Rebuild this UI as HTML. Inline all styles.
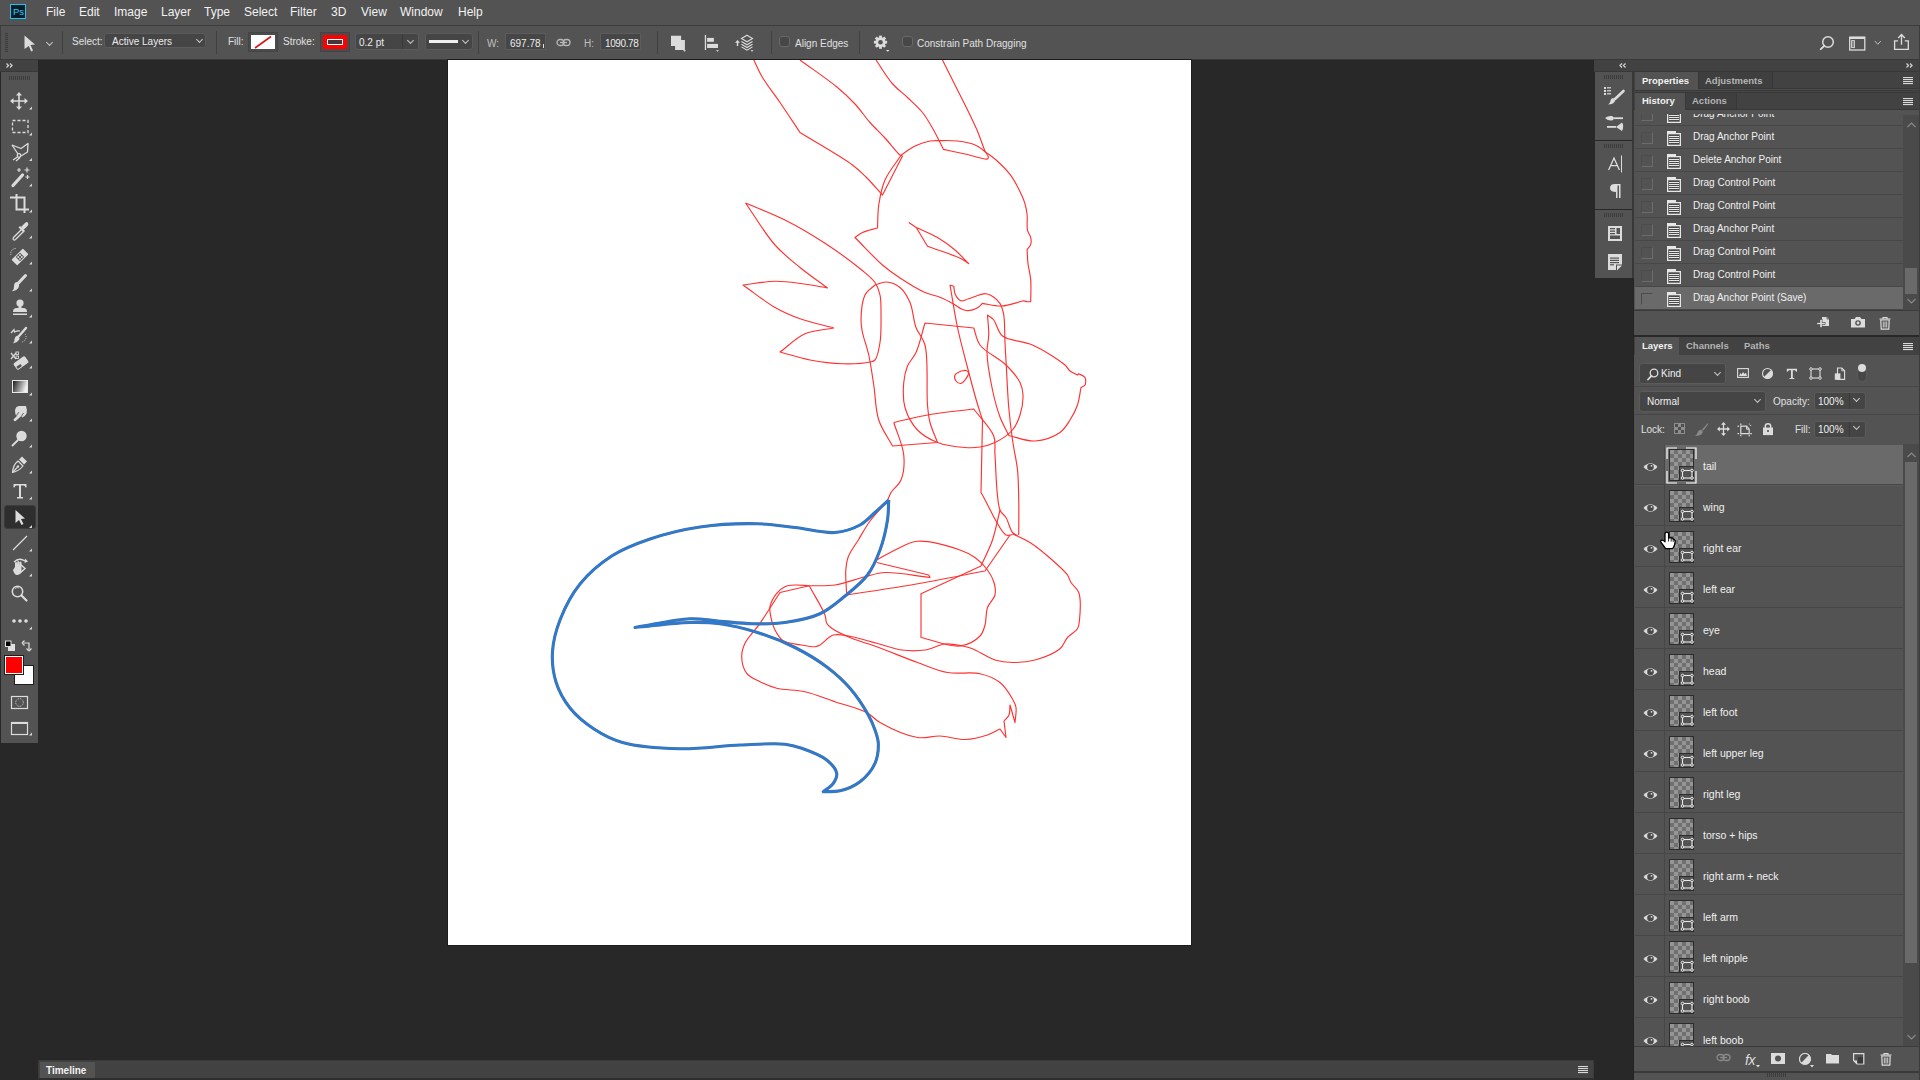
<!DOCTYPE html>
<html><head><meta charset="utf-8">
<style>
*{box-sizing:border-box;margin:0;padding:0}
html,body{width:1920px;height:1080px;overflow:hidden;background:#282828;font-family:"Liberation Sans",sans-serif;color:#e8e8e8}
.a{position:absolute}
.t{position:absolute;white-space:nowrap;line-height:1}
#menubar{left:0;top:0;width:1920px;height:25px;background:#535353}
#menubar .t{font-size:12px;top:6px;color:#f2f2f2}
#opts{left:0;top:25px;width:1920px;height:35px;background:#535353;border-top:1px solid #3c3c3c;border-bottom:1px solid #393939}
#opts .t{font-size:10px;color:#e6e6e6}
.sep{position:absolute;width:1px;background:#404040}
.field{position:absolute;background:#454545;border:1px solid #5b5b5b;border-radius:3px}
.chev{position:absolute;width:6px;height:6px;border-right:1px solid #bdbdbd;border-bottom:1px solid #bdbdbd;transform:rotate(45deg)}
.cb{position:absolute;width:11px;height:11px;border:1px solid #686868;background:#474747;border-radius:3px}
.ptab{position:absolute;font-size:9.5px;font-weight:bold;line-height:1;white-space:nowrap}
.hrow{position:absolute;left:1635px;width:268px;height:23px;border-bottom:1px solid #484848;background:#535353}
.hrow .t{font-size:10px;left:58px;top:7px;color:#f0f0f0}
.hico{position:absolute;left:39px;top:5px;width:14px;height:14px;border:1px solid #e0e0e0;border-radius:1px}
.hbox{position:absolute;left:12px;top:6px;width:12px;height:12px;border:1px solid #4a4a4a}
.lrow{position:absolute;left:1635px;width:268px;height:41px;border-bottom:1px solid #444;background:#535353}
.lrow .t{font-size:10.5px;left:68px;top:16px;color:#f0f0f0}
</style></head><body>

<!-- MENU BAR -->
<div id="menubar" class="a">
  <div class="a" style="left:10px;top:4px;width:16px;height:15px;background:#001e28;border:1px solid #22c0f0"></div>
  <div class="t" style="left:13px;top:7px;font-size:9.5px;color:#3ccaf5">Ps</div>
  <div class="t" style="left:46px">File</div>
  <div class="t" style="left:79px">Edit</div>
  <div class="t" style="left:114px">Image</div>
  <div class="t" style="left:161px">Layer</div>
  <div class="t" style="left:204px">Type</div>
  <div class="t" style="left:244px">Select</div>
  <div class="t" style="left:290px">Filter</div>
  <div class="t" style="left:331px">3D</div>
  <div class="t" style="left:361px">View</div>
  <div class="t" style="left:400px">Window</div>
  <div class="t" style="left:458px">Help</div>
</div>

<!-- OPTIONS BAR -->
<div id="opts" class="a"></div>
<div class="a" style="left:0;top:26px;width:1px;height:33px;background:#3e3e3e"></div>
<svg class="a" style="left:5px;top:33px" width="3" height="19"><g fill="#3a3a3a"><rect y="0" width="3" height="1"/><rect y="2" width="3" height="1"/><rect y="4" width="3" height="1"/><rect y="6" width="3" height="1"/><rect y="8" width="3" height="1"/><rect y="10" width="3" height="1"/><rect y="12" width="3" height="1"/><rect y="14" width="3" height="1"/><rect y="16" width="3" height="1"/><rect y="18" width="3" height="1"/></g></svg>
<svg class="a" style="left:24px;top:35px" width="12" height="17"><path d="M0.5,0.5 L11,9.5 L6.5,10 L9,15.5 L7.2,16.5 L4.8,11 L0.5,14 Z" fill="#dcdcdc"/></svg>
<div class="chev" style="left:47px;top:40px;width:5px;height:5px;border-color:#c8c8c8"></div>
<div class="sep" style="left:62px;top:31px;height:23px"></div>
<div class="t" style="left:72px;top:37px;font-size:10px;color:#e0e0e0">Select:</div>
<div class="field" style="left:104px;top:33px;width:102px;height:15px;border-radius:3px"></div>
<div class="t" style="left:112px;top:37px;font-size:10px;color:#ececec">Active Layers</div>
<div class="chev" style="left:197px;top:37px;width:5px;height:5px;border-color:#c8c8c8"></div>
<div class="sep" style="left:216px;top:31px;height:23px"></div>
<div class="t" style="left:228px;top:37px;font-size:10px;color:#e0e0e0">Fill:</div>
<div class="a" style="left:248px;top:32px;width:30px;height:20px;border:1px solid #444;background:#4b4b4b"></div>
<div class="a" style="left:251px;top:35px;width:24px;height:14px;background:#fff"></div>
<svg class="a" style="left:251px;top:35px" width="24" height="14"><line x1="4" y1="13" x2="20" y2="1.5" stroke="#d01818" stroke-width="1.6"/></svg>
<div class="t" style="left:283px;top:37px;font-size:10px;color:#e0e0e0">Stroke:</div>
<div class="a" style="left:320px;top:32px;width:30px;height:20px;border:1px solid #444;background:#4b4b4b"></div>
<div class="a" style="left:323px;top:35px;width:24px;height:14px;background:#f00"></div>
<div class="a" style="left:327px;top:39px;width:16px;height:6px;border:1px solid #fff;background:#3c3c3c"></div>
<div class="field" style="left:355px;top:33px;width:64px;height:17px;border-radius:3px"></div>
<div class="a" style="left:402px;top:34px;width:1px;height:15px;background:#3a3a3a"></div>
<div class="t" style="left:359px;top:38px;font-size:10px;color:#ececec">0.2 pt</div>
<div class="chev" style="left:408px;top:38px;width:5px;height:5px;border-color:#c8c8c8"></div>
<div class="field" style="left:425px;top:33px;width:48px;height:17px;border-radius:3px"></div>
<div class="a" style="left:429px;top:40px;width:29px;height:3px;background:#f0f0f0"></div>
<div class="chev" style="left:463px;top:38px;width:5px;height:5px;border-color:#c8c8c8"></div>
<div class="sep" style="left:478px;top:31px;height:23px"></div>
<div class="t" style="left:487px;top:39px;font-size:10px;color:#c0c0c0">W:</div>
<div class="a" style="left:505px;top:33px;width:41px;height:17px;background:#464646;border:1px solid #5c5c5c"></div>
<div class="t" style="left:510px;top:39px;font-size:10px;color:#ececec">697.78</div><div class="a" style="left:543px;top:44px;width:1px;height:4px;background:#e0e0e0"></div>
<svg class="a" style="left:556px;top:38px" width="16" height="10"><g fill="none" stroke="#b8b8b8" stroke-width="1.3"><rect x="1" y="1.5" width="7" height="6" rx="3"/><rect x="7" y="1.5" width="7" height="6" rx="3"/></g><line x1="4" y1="4.5" x2="11" y2="4.5" stroke="#b8b8b8" stroke-width="1.3"/></svg>
<div class="t" style="left:584px;top:39px;font-size:10px;color:#c0c0c0">H:</div>
<div class="a" style="left:600px;top:33px;width:41px;height:17px;background:#464646;border:1px solid #5c5c5c"></div>
<div class="t" style="left:605px;top:39px;font-size:10px;color:#ececec;letter-spacing:-0.4px">1090.78</div>
<div class="sep" style="left:657px;top:31px;height:23px"></div>
<svg class="a" style="left:670px;top:35px" width="18" height="18"><path d="M1,0.8 H11.1 V5 H14.9 V14.9 H5.1 V11 H1Z" fill="#dcdcdc"/><path d="M13,15.3 H16 L14.5,16.8Z" fill="#e6e6e6"/></svg>
<svg class="a" style="left:704px;top:35px" width="18" height="18"><rect x="0.8" y="0" width="1.3" height="15" fill="#dcdcdc"/><rect x="3.1" y="2.9" width="6.8" height="3.9" fill="#dcdcdc"/><rect x="3.1" y="8.9" width="10.9" height="4.1" fill="#dcdcdc"/><path d="M12,15.3 H15 L13.5,16.8Z" fill="#e6e6e6"/></svg>
<svg class="a" style="left:734px;top:34px" width="22" height="19"><path d="M3.5,6 L1,8.7 H2.8 V12 H4.2 V8.7 H6Z" fill="#dcdcdc"/><g fill="none" stroke="#dcdcdc" stroke-width="1.1"><path d="M13,1.2 L18.5,4.5 L13,7.8 L7.5,4.5Z"/><path d="M7.5,7.5 L13,10.8 L18.5,7.5"/><path d="M7.5,10.2 L13,13.5 L18.5,10.2"/><path d="M7.5,12.9 L13,16.2 L18.5,12.9"/></g><path d="M16.5,16.3 H19.5 L18,17.8Z" fill="#e6e6e6"/></svg>
<div class="sep" style="left:771px;top:31px;height:23px"></div>
<div class="cb" style="left:779px;top:36px"></div>
<div class="t" style="left:795px;top:38.5px;font-size:10px;color:#e0e0e0">Align Edges</div>
<div class="sep" style="left:859px;top:31px;height:23px"></div>
<svg class="a" style="left:873px;top:35px" width="17" height="18"><g transform="translate(7.5,7.2)" fill="#dcdcdc"><circle r="5"/><rect x="-1.4" y="-6.6" width="2.8" height="3" transform="rotate(0)"/><rect x="-1.4" y="-6.6" width="2.8" height="3" transform="rotate(45)"/><rect x="-1.4" y="-6.6" width="2.8" height="3" transform="rotate(90)"/><rect x="-1.4" y="-6.6" width="2.8" height="3" transform="rotate(135)"/><rect x="-1.4" y="-6.6" width="2.8" height="3" transform="rotate(180)"/><rect x="-1.4" y="-6.6" width="2.8" height="3" transform="rotate(225)"/><rect x="-1.4" y="-6.6" width="2.8" height="3" transform="rotate(270)"/><rect x="-1.4" y="-6.6" width="2.8" height="3" transform="rotate(315)"/><circle r="2.3" fill="#535353"/></g><path d="M13,15 H16.5 L14.75,16.8Z" fill="#e6e6e6"/></svg>
<div class="cb" style="left:902px;top:36px"></div>
<div class="t" style="left:917px;top:38.5px;font-size:10px;color:#e0e0e0">Constrain Path Dragging</div>
<svg class="a" style="left:1819px;top:35px" width="17" height="16"><circle cx="9" cy="7" r="5.3" fill="none" stroke="#dcdcdc" stroke-width="1.5"/><line x1="5.2" y1="10.8" x2="1.8" y2="14.2" stroke="#dcdcdc" stroke-width="1.9" stroke-linecap="round"/></svg>
<svg class="a" style="left:1849px;top:36px" width="17" height="15"><rect x="0.7" y="1.2" width="15.1" height="12.8" fill="none" stroke="#dcdcdc" stroke-width="1.3"/><rect x="0.7" y="0.8" width="15.1" height="2.2" fill="#dcdcdc"/><rect x="2.6" y="4.6" width="2.8" height="7" fill="none" stroke="#dcdcdc" stroke-width="0.9"/><g fill="#dcdcdc"><circle cx="4" cy="6" r="0.7"/><circle cx="4" cy="8" r="0.7"/><circle cx="4" cy="10" r="0.7"/></g></svg>
<svg class="a" style="left:1874px;top:40px" width="8" height="6"><path d="M0.8,1 L3.8,4.3 L6.8,1" fill="none" stroke="#c0c0c0" stroke-width="1"/></svg>
<svg class="a" style="left:1893px;top:33px" width="18" height="18"><path d="M5,7.8 H1.6 V16.4 H15.3 V7.8 H11.8" fill="none" stroke="#dcdcdc" stroke-width="1.3"/><path d="M8.5,11.8 V1.5 M5.2,5 L8.5,1.5 L11.8,5" fill="none" stroke="#dcdcdc" stroke-width="1.3"/></svg>


<!-- LEFT TOOLBAR -->
<div class="a" style="left:0;top:60px;width:38px;height:11px;background:#424242"></div><div class="a" style="left:0;top:71px;width:38px;height:1px;background:#383838"></div>
<div class="a" style="left:1px;top:72px;width:37px;height:671px;background:#535353"></div>
<svg class="a" style="left:6px;top:63px" width="8" height="6"><path d="M0.5,0.5 L2.5,2.5 L0.5,4.5 M4,0.5 L6,2.5 L4,4.5" fill="none" stroke="#d0d0d0" stroke-width="1.3"/></svg>
<svg class="a" style="left:9px;top:76px" width="21" height="4"><g fill="#3c3c3c"><rect x="0" y="0" width="1" height="4"/><rect x="2" y="0" width="1" height="4"/><rect x="4" y="0" width="1" height="4"/><rect x="6" y="0" width="1" height="4"/><rect x="8" y="0" width="1" height="4"/><rect x="10" y="0" width="1" height="4"/><rect x="12" y="0" width="1" height="4"/><rect x="14" y="0" width="1" height="4"/><rect x="16" y="0" width="1" height="4"/><rect x="18" y="0" width="1" height="4"/><rect x="20" y="0" width="1" height="4"/></g></svg>
<div class="a" style="left:4px;top:505px;width:32px;height:24px;background:#2e2e2e;border:1px solid #3c3c3c;border-radius:3px"></div>
<svg class="a" style="left:0;top:60px" width="40" height="690" viewBox="0 60 40 690">
<g fill="#d8d8d8"><path d="M32,106.5 L32,109.5 L29,109.5 Z"/><path d="M32,132.5 L32,135.5 L29,135.5 Z"/><path d="M32,158.0 L32,161.0 L29,161.0 Z"/><path d="M32,183.5 L32,186.5 L29,186.5 Z"/><path d="M32,209.5 L32,212.5 L29,212.5 Z"/><path d="M32,235.5 L32,238.5 L29,238.5 Z"/><path d="M32,261.5 L32,264.5 L29,264.5 Z"/><path d="M32,288.5 L32,291.5 L29,291.5 Z"/><path d="M32,314.5 L32,317.5 L29,317.5 Z"/><path d="M32,340.5 L32,343.5 L29,343.5 Z"/><path d="M32,365.5 L32,368.5 L29,368.5 Z"/><path d="M32,392.5 L32,395.5 L29,395.5 Z"/><path d="M32,418.5 L32,421.5 L29,421.5 Z"/><path d="M32,444.5 L32,447.5 L29,447.5 Z"/><path d="M32,470.5 L32,473.5 L29,473.5 Z"/><path d="M32,496.5 L32,499.5 L29,499.5 Z"/><path d="M32,548.5 L32,551.5 L29,551.5 Z"/><path d="M32,573.5 L32,576.5 L29,576.5 Z"/><path d="M32,626.5 L32,629.5 L29,629.5 Z"/>
<path d="M32,525 L32,528 L29,528Z"/>
</g>
<g fill="none" stroke="#dcdcdc" stroke-width="1.6" stroke-linecap="round" stroke-linejoin="round">
 <!-- move -->
 <path d="M12,101 H26 M19,94 V108"/>
</g>
<g fill="#dcdcdc">
 <path d="M19,92 L22,95.5 L16,95.5Z M19,110 L22,106.5 L16,106.5Z M10,101 L13.5,98 L13.5,104Z M28,101 L24.5,98 L24.5,104Z"/>
</g>
<!-- marquee -->
<rect x="12.5" y="120.5" width="15.5" height="12" fill="none" stroke="#dcdcdc" stroke-width="1.3" stroke-dasharray="3,2"/>
<!-- lasso -->
<g fill="none" stroke="#dcdcdc" stroke-width="1.3" stroke-linejoin="round">
 <path d="M12,145 L21,148.5 L28,143.5 L27.5,152 L21,156"/>
 <path d="M12,145 L18,154"/>
 <circle cx="19" cy="155.5" r="1.8"/>
 <path d="M17.5,157 L13,160 M20,157.5 L16,161"/>
</g>
<!-- wand -->
<path d="M13,185.5 L22.5,175" stroke="#dcdcdc" stroke-width="3.2" stroke-linecap="round"/>
<path d="M19,168 V172 M17,170 H21 M27,167.5 V172.5 M24.5,170 H29.5 M27.5,175 V179 M25.5,177 H29.5" stroke="#dcdcdc" stroke-width="1.2"/>
<!-- crop -->
<path d="M10,197.5 H24.5 V213 M16.5,194 V209.5 H29" fill="none" stroke="#dcdcdc" stroke-width="2"/>
<g transform="translate(0,2)"><!-- eyedropper -->
<g fill="#dcdcdc"><path d="M21,225 L25,221 Q27,219 28,221 Q29,222.5 27.5,224 L23.5,228Z"/><path d="M20,224 L25,229 L23.5,230.5 L18.5,225.5Z"/></g>
<path d="M21.5,227.5 L13.5,235.5 Q12.5,237.5 14,238 Q15,238.5 16,237 L24,229" fill="none" stroke="#dcdcdc" stroke-width="1.3"/>
</g><!-- healing -->
<g transform="translate(20,257) rotate(-45)"><rect x="-8" y="-4" width="16" height="8" rx="1" fill="#dcdcdc"/><rect x="-3" y="-3" width="6" height="6" fill="#535353"/><g fill="#dcdcdc"><circle cx="-1.3" cy="-1.3" r="1"/><circle cx="1.3" cy="-1.3" r="1"/><circle cx="-1.3" cy="1.3" r="1"/><circle cx="1.3" cy="1.3" r="1"/></g></g>
<path d="M11,255 A5,5 0 0 1 16,248.5" fill="none" stroke="#dcdcdc" stroke-width="1" stroke-dasharray="1,1"/>
<!-- brush -->
<path d="M18,283.5 L25.5,275.5" stroke="#dcdcdc" stroke-width="3" stroke-linecap="round"/>
<path d="M16.5,282 Q20,283.5 18.8,287 Q17,290.8 12,291.3 Q14.5,288.5 14,286 Q14.2,282.5 16.5,282Z" fill="#dcdcdc"/>
<!-- stamp -->
<g fill="#dcdcdc"><circle cx="20" cy="303" r="3.6"/><rect x="18.5" y="305" width="3" height="3"/><path d="M13,312 Q13,308 16.5,308 H23.5 Q27,308 27,312Z"/><rect x="13" y="313.5" width="14" height="1.5"/></g>
</g><g transform="translate(0,2)"><!-- history brush -->
<path d="M19,334 L26,326" stroke="#dcdcdc" stroke-width="2.4" stroke-linecap="round"/>
<path d="M17.5,333.5 Q20.5,335.5 19,338 Q17,341 13,341.5 Q15,339 14.5,337 Q15,334 17.5,333.5Z" fill="#dcdcdc"/>
<path d="M11,331 L14,327.5 L14.5,330 Q17,328.5 20,329" fill="none" stroke="#dcdcdc" stroke-width="1.2"/>
<path d="M25,332 A5,5 0 0 1 22,340" fill="none" stroke="#dcdcdc" stroke-width="1" stroke-dasharray="1,1.2"/>
</g><!-- eraser -->
<g transform="translate(21,363) rotate(-35)"><rect x="-7" y="-4" width="14" height="8" rx="1.5" fill="#dcdcdc"/><rect x="-6" y="0.5" width="5" height="2.5" fill="#535353"/></g>
<path d="M11,353 L16,359 M16,353 L11,359" stroke="#dcdcdc" stroke-width="1.2"/>
<rect x="16" y="352" width="2.5" height="2.5" fill="none" stroke="#dcdcdc" stroke-width="0.9"/>
<rect x="16" y="356" width="2.5" height="2.5" fill="none" stroke="#dcdcdc" stroke-width="0.9"/>
<!-- gradient -->
<defs><linearGradient id="gr" x1="0" y1="0" x2="1" y2="0.3"><stop offset="0" stop-color="#111"/><stop offset="1" stop-color="#f0f0f0"/></linearGradient></defs>
<rect x="12.5" y="380.5" width="15" height="12" fill="url(#gr)" stroke="#e8e8e8" stroke-width="1"/>
<!-- smudge -->
<path d="M15,410.5 Q15.5,406.3 19,406 H26 Q27.4,410 26.6,413.5 Q25.2,416.6 22.2,417.4 L20.5,415 L16.8,417 Q14.8,414 15,410.5Z" fill="#dcdcdc"/>
<path d="M22.6,413.2 L15,419.8" stroke="#dcdcdc" stroke-width="2.8" stroke-linecap="round"/>
<path d="M18.8,412.2 L16.2,415.8 M23.6,413 L21.2,416.6" stroke="#535353" stroke-width="0.9"/>
<!-- dodge -->
<circle cx="21.5" cy="436" r="5.2" fill="#dcdcdc"/>
<path d="M18,440 L12.5,445.5" stroke="#dcdcdc" stroke-width="1.8" stroke-linecap="round"/>
<!-- pen -->
<g fill="none" stroke="#dcdcdc" stroke-width="1.2" stroke-linejoin="round"><path d="M12.5,472.5 Q13,465 18,461 L23,466 Q19,471 12.5,472.5Z"/><path d="M12.5,472.5 L17.5,467"/></g>
<path d="M19,459.5 L22,456.5 L27,461.5 L24,464.5Z" fill="#dcdcdc"/>
<circle cx="18" cy="466.5" r="1.2" fill="#dcdcdc"/>
<!-- type -->
<path d="M13.5,484 H26.5 V487.5 H25.5 Q25,485.5 23.5,485.5 H21 V497 H23 V498.5 H17 V497 H19 V485.5 H16.5 Q15,485.5 14.5,487.5 H13.5Z" fill="#dcdcdc"/>
<!-- path select -->
<path d="M15.5,510 L25,518.5 L21,519 L23.5,524 L21.5,525 L19,520 L15.5,523Z" fill="#dcdcdc"/>
<!-- line -->
<path d="M13,550 L27,536" stroke="#dcdcdc" stroke-width="1.3"/>
<!-- rotate view -->
<path d="M20,564 L25,568.5 L20,573" fill="none" stroke="#dcdcdc" stroke-width="1.5"/>
<path d="M14,562 Q19,557 25,561" fill="none" stroke="#dcdcdc" stroke-width="1.3"/>
<path d="M25,558.5 L28,561.5 L24.5,563Z" fill="#dcdcdc"/>
<path d="M13,570 L15,567 L15,562.5 Q16,561.5 17,562.5 L17,566 L17.2,561.5 Q18.2,560.5 19.2,561.5 L19.2,566 L19.5,562 Q20.5,561 21.5,562 L21.5,572 Q20,575 17,575 Q14.5,575 13,570Z" fill="#dcdcdc"/>
<!-- zoom -->
<circle cx="17.5" cy="591.5" r="5.2" fill="none" stroke="#dcdcdc" stroke-width="1.5"/>
<path d="M21.5,595.5 L26.5,600.5" stroke="#dcdcdc" stroke-width="2.2" stroke-linecap="round"/>
<path d="M15,588.5 A3.5,3.5 0 0 1 19,588" fill="none" stroke="#dcdcdc" stroke-width="0.8"/>
<!-- more -->
<g fill="#dcdcdc"><circle cx="14" cy="621" r="1.8"/><circle cx="20" cy="621" r="1.8"/><circle cx="26" cy="621" r="1.8"/></g>
<!-- default colors -->
<rect x="8.5" y="644.5" width="6" height="6" fill="#e0e0e0" stroke="#e0e0e0"/>
<rect x="5.5" y="641" width="5.5" height="5.5" fill="#000" stroke="#e0e0e0" stroke-width="1"/>
<!-- swap -->
<path d="M23.5,643 H29 V649.5 M22,643 L24.5,640.5 M22,643 L24.5,645.5 M29,651 L26.5,648.5 M29,651 L31.5,648.5" fill="none" stroke="#dcdcdc" stroke-width="1.2"/>
<!-- fg/bg -->
<rect x="14.5" y="665.5" width="19" height="19" fill="#fff" stroke="#1e1e1e" stroke-width="1"/>
<rect x="4.5" y="655.5" width="19" height="19" fill="#f00" stroke="#1e1e1e" stroke-width="1"/>
<rect x="5.5" y="656.5" width="17" height="17" fill="none" stroke="#fff" stroke-width="1"/>
<!-- quick mask -->
<rect x="11.5" y="696.5" width="16" height="12" fill="none" stroke="#dcdcdc" stroke-width="1.2"/>
<circle cx="19.5" cy="702.5" r="3.8" fill="none" stroke="#dcdcdc" stroke-width="1" stroke-dasharray="0.9,1.1"/>
<!-- screen mode -->
<rect x="11.5" y="722.5" width="16" height="12" fill="none" stroke="#dcdcdc" stroke-width="1.2"/>
<rect x="11.5" y="722" width="16" height="2" fill="#dcdcdc"/>
<path d="M32,732.5 L32,735.5 L29,735.5Z" fill="#d8d8d8"/>
</svg>

<!-- CANVAS -->
<div class="a" style="left:447px;top:59px;width:745px;height:887px;background:#1c1c1c"></div>
<div class="a" style="left:448px;top:60px;width:743px;height:885px;background:#fff;overflow:hidden" id="canvas"><svg class="a" style="left:0;top:0" width="743" height="885" viewBox="448 60 743 885">
<g fill="none" stroke="#ff3232" stroke-width="1.15" stroke-linejoin="round">
<path d="M753.8,60.0 C756.67,65.83 758.80,71.29 762.50,77.50 C767.12,85.25 774.02,93.75 780.00,102.50 C786.50,112.01 793.33,122.50 800.00,132.50 C817.50,143.33 840.96,156.40 852.50,165.00 C858.74,169.65 861.39,172.46 866.00,177.00 C871.36,182.27 877.00,189.00 882.50,195.00 L902.50,156.00 C901.67,155.67 901.06,155.75 900.00,155.00 C896.92,152.83 890.06,143.48 885.00,138.00 C880.06,132.66 874.88,128.01 870.00,122.50 C864.87,116.71 860.40,109.82 855.00,104.00 C849.57,98.15 844.65,93.46 837.50,87.50 C827.55,79.22 812.50,69.17 800.00,60.00"/>
<path d="M876.0,60.0 C881.50,67.92 886.75,77.17 892.50,83.75 C897.32,89.27 902.55,92.76 907.50,97.50 C912.55,102.34 918.19,107.13 922.50,112.50 C926.64,117.66 929.63,123.13 933.00,129.00 C936.65,135.36 940.00,142.60 943.50,149.40 C950.67,150.93 957.76,152.42 965.00,154.00 C972.42,155.62 985.01,160.15 987.50,159.00 C988.22,158.67 988.41,158.04 988.40,157.30 C988.39,155.86 986.07,153.10 984.90,151.00 C982.27,144.00 979.68,136.37 977.00,130.00 C974.70,124.53 972.82,120.84 970.00,115.00 C965.99,106.69 959.77,94.54 955.00,85.00 C950.64,76.29 946.67,68.33 942.50,60.00"/>
<path d="M901.2,155.0 C905.83,152.00 910.16,148.34 915.00,146.00 C919.75,143.70 925.45,141.83 930.00,141.00 C933.62,140.34 936.20,140.63 940.00,140.60 C945.04,140.56 951.77,140.28 957.60,141.00 C963.50,141.73 970.14,142.78 975.20,145.00 C979.65,146.95 982.92,150.14 986.70,152.90 C990.53,155.70 994.28,158.31 998.00,161.70 C1002.19,165.52 1006.84,170.15 1010.40,174.90 C1013.89,179.56 1016.76,185.07 1019.20,189.90 C1021.34,194.13 1023.18,198.03 1024.50,202.20 C1025.78,206.24 1026.59,210.11 1027.10,214.50 C1027.68,219.44 1026.54,226.25 1027.50,230.40 C1028.17,233.29 1030.18,235.01 1030.70,237.40 C1031.20,239.68 1031.34,242.32 1030.70,244.40 C1030.09,246.39 1028.30,247.93 1027.10,249.70 C1027.40,254.40 1027.44,258.98 1028.00,263.80 C1028.60,268.93 1030.21,273.87 1030.70,279.60 C1031.27,286.33 1030.70,294.33 1030.70,301.70 C1029.50,301.70 1028.28,301.85 1027.10,301.70 C1025.92,301.55 1024.77,301.10 1023.60,300.80 C1016.27,302.53 1008.72,305.65 1001.60,306.00 C994.99,306.32 988.73,304.27 982.30,303.40 C981.10,304.60 980.11,305.99 978.70,307.00 C977.18,308.09 975.34,309.02 973.40,309.60 C971.28,310.24 968.56,310.71 966.40,310.50 C964.46,310.31 962.86,309.58 961.00,308.70 C958.76,307.64 956.78,305.86 954.00,304.30 C950.18,302.15 944.83,299.26 940.00,297.30 C935.16,295.33 930.49,294.94 925.00,292.50 C917.56,289.20 907.47,282.92 900.00,278.00 C893.51,273.73 888.77,270.42 882.50,265.00 C874.12,257.77 864.17,246.67 855.00,237.50 C857.50,235.83 859.44,233.94 862.50,232.50 C866.53,230.60 872.50,229.50 877.50,228.00 C877.92,220.33 877.58,212.77 878.75,205.00 C879.99,196.78 881.49,188.05 885.00,180.00 C888.77,171.34 895.83,163.33 901.25,155.00"/>
<path d="M908.8,222.5 L916.25,227.50 L927.50,246.25 C938.75,250.42 954.17,255.14 961.25,258.75 C964.79,260.56 966.25,262.08 968.75,263.75 C964.17,259.17 960.05,254.28 955.00,250.00 C949.69,245.50 943.80,241.19 937.50,237.50 C930.92,233.64 923.33,230.83 916.25,227.50"/>
<path d="M950.0,285.0 L953.75,286.25 C954.33,288.43 953.94,291.28 955.00,293.70 C956.15,296.32 958.66,300.05 961.00,300.80 C963.07,301.46 965.14,299.79 968.00,299.00 C972.58,297.73 981.25,293.52 985.80,293.70 C988.69,293.81 990.60,294.98 992.80,296.40 C995.34,298.04 998.14,300.66 999.90,303.40 C1001.69,306.18 1002.67,310.01 1003.40,313.00 C1004.00,315.48 1004.06,317.00 1004.30,320.00 C1004.73,325.36 1004.68,335.00 1005.00,342.50 C1005.33,350.00 1005.75,356.32 1006.25,365.00 C1006.93,376.93 1007.60,394.30 1008.75,407.50 C1009.76,419.07 1011.01,429.40 1012.50,440.00 C1013.94,450.22 1016.46,459.97 1017.50,470.00 C1018.53,479.97 1018.53,489.61 1018.75,500.00 C1018.98,511.21 1018.75,523.33 1018.75,535.00"/>
<path d="M950.0,285.0 C952.50,299.17 954.54,313.60 957.50,327.50 C960.39,341.09 964.22,354.87 967.50,367.50 C970.46,378.91 973.49,390.50 976.25,400.00 C978.43,407.50 980.42,413.33 982.50,420.00 L981.00,492.50 C989.33,506.67 999.41,531.56 1006.00,535.00 C1008.40,536.25 1010.33,534.67 1012.50,534.50"/>
<path d="M1008.8,435.5 C1005.83,429.33 1002.56,423.87 1000.00,417.00 C997.01,408.96 994.57,399.81 992.50,390.00 C990.09,378.59 987.23,362.66 987.00,352.50 C986.84,345.58 988.64,341.03 988.75,335.00 C988.87,328.56 987.92,321.67 987.50,315.00 C989.58,316.67 991.73,317.59 993.75,320.00 C996.80,323.64 997.54,331.98 1002.50,336.00 C1009.00,341.26 1022.59,340.56 1032.50,345.00 C1043.44,349.91 1059.09,359.88 1065.00,365.00 C1067.67,367.32 1067.98,369.35 1070.00,371.00 C1072.11,372.72 1075.00,373.67 1077.50,375.00 L1078.75,373.75 C1080.83,375.00 1083.95,375.65 1085.00,377.50 C1086.06,379.38 1085.94,383.31 1085.00,385.00 C1084.26,386.34 1082.33,386.67 1081.00,387.50 C1079.83,393.33 1079.38,399.51 1077.50,405.00 C1075.67,410.32 1072.96,415.37 1070.00,420.00 C1067.11,424.52 1064.71,429.19 1060.00,432.50 C1053.94,436.75 1043.51,440.48 1035.00,441.00 C1026.43,441.52 1017.50,437.33 1008.75,435.50"/>
<path d="M961.0,371.0 C962.67,370.83 964.70,370.04 966.00,370.50 C967.09,370.89 968.32,371.87 968.50,373.00 C968.77,374.68 966.41,378.17 965.00,380.00 C963.83,381.51 962.48,383.31 961.00,383.50 C959.48,383.69 957.01,382.36 956.00,381.00 C954.95,379.58 954.29,376.63 955.00,375.00 C955.77,373.23 959.00,372.33 961.00,371.00"/>
<path d="M875.0,285.0 C878.67,284.00 882.15,281.79 886.00,282.00 C890.42,282.24 896.11,284.36 900.00,287.50 C904.26,290.94 907.42,296.60 910.00,302.50 C913.08,309.55 913.24,320.06 916.00,327.50 C918.42,334.01 922.92,337.12 925.00,345.00 C928.64,358.76 926.21,391.00 927.50,405.00 C928.20,412.60 928.48,416.56 930.00,422.50 C931.67,429.03 935.00,435.83 937.50,442.50 L892.50,446.00 C887.92,437.33 881.87,429.61 878.75,420.00 C875.33,409.47 875.48,396.21 873.75,385.00 C872.14,374.61 870.80,364.23 868.75,355.00 C866.96,346.91 863.77,338.95 862.50,332.50 C861.56,327.77 860.90,324.87 861.00,320.00 C861.14,313.09 861.88,301.12 865.00,295.00 C867.33,290.43 871.67,288.33 875.00,285.00"/>
<path d="M745.5,203.0 C758.67,208.67 771.99,213.44 785.00,220.00 C798.50,226.81 812.16,234.92 825.00,243.30 C837.72,251.60 852.67,262.53 861.70,270.00 C867.42,274.74 871.91,277.96 875.00,282.50 C877.66,286.39 878.96,290.25 880.00,295.00 C881.27,300.80 880.95,307.80 881.00,315.00 C881.06,323.44 881.28,334.43 880.00,342.50 C878.96,349.06 877.57,357.15 875.00,360.00 C873.60,361.55 872.40,361.46 870.00,362.00 C864.58,363.22 852.04,363.99 842.50,363.75 C832.11,363.48 820.55,362.00 810.00,360.00 C799.73,358.05 790.00,354.67 780.00,352.00 C788.33,345.92 795.90,337.75 805.00,333.75 C813.86,329.86 824.17,329.92 833.75,328.00 C822.50,324.92 810.28,322.45 800.00,318.75 C790.90,315.48 783.61,312.40 775.00,307.50 C764.72,301.64 753.67,292.50 743.00,285.00 C753.67,283.75 764.73,281.38 775.00,281.25 C784.51,281.13 793.57,282.59 802.50,283.75 C811.05,284.86 819.17,286.58 827.50,288.00 C818.33,281.17 808.79,274.71 800.00,267.50 C791.30,260.36 783.17,254.21 775.00,245.00 C764.91,233.62 755.33,217.00 745.50,203.00"/>
<path d="M925.0,323.0 L973.75,328.00 C975.83,333.67 976.06,339.64 980.00,345.00 C985.30,352.22 998.99,358.12 1006.00,365.00 C1011.80,370.69 1017.24,376.86 1020.00,382.50 C1022.09,386.77 1022.80,390.32 1023.00,395.00 C1023.25,400.87 1021.91,408.95 1020.00,415.00 C1018.26,420.51 1016.24,425.62 1012.50,430.00 C1008.26,434.96 1000.85,439.63 995.00,442.50 C990.01,444.95 985.05,446.17 980.00,447.00 C975.05,447.81 970.73,447.92 965.00,447.50 C957.19,446.93 945.67,445.66 937.50,442.50 C929.99,439.60 922.86,435.64 917.50,430.00 C911.90,424.11 907.28,415.48 905.00,407.50 C902.75,399.63 903.10,389.93 903.75,382.50 C904.28,376.39 905.40,371.06 907.50,366.00 C909.54,361.09 913.45,358.08 916.00,352.50 C919.55,344.75 922.00,332.83 925.00,323.00"/>
<path d="M893.8,422.5 C905.83,419.83 917.30,416.70 930.00,414.50 C943.85,412.11 959.17,410.83 973.75,409.00 C980.42,418.00 990.57,427.33 993.75,436.00 C996.14,442.52 994.38,447.03 995.00,455.00 C996.06,468.58 996.13,500.37 1000.00,510.00 C1001.62,514.01 1004.15,514.42 1006.00,517.50 C1008.42,521.52 1009.94,529.58 1012.50,532.50 C1014.03,534.24 1015.83,534.50 1017.50,535.50"/>
<path d="M893.8,422.5 C897.08,433.33 902.78,444.78 903.75,455.00 C904.58,463.79 903.73,473.40 901.00,480.00 C898.82,485.27 893.34,488.73 891.00,492.50 C889.32,495.21 889.39,497.02 887.50,500.00 C884.06,505.42 875.04,513.99 870.00,521.00 C865.45,527.33 862.03,533.86 858.30,540.00 C854.82,545.74 850.36,551.27 848.30,556.70 C846.58,561.23 846.19,564.85 845.80,570.00 C845.27,577.00 846.40,586.67 846.70,595.00 C869.47,591.40 892.12,588.16 915.00,584.20 C938.22,580.18 961.67,575.40 985.00,571.00 L1010.00,535.00"/>
<path d="M1000.0,510.0 C997.50,520.00 995.53,531.12 992.50,540.00 C989.96,547.46 985.86,555.29 983.75,560.00 C982.59,562.59 981.92,564.00 981.00,566.00"/>
<path d="M876.7,560.0 C882.80,556.67 888.48,553.03 895.00,550.00 C902.01,546.74 908.69,541.99 917.50,541.25 C929.31,540.26 949.61,546.40 960.00,550.00 C966.46,552.24 970.46,554.23 975.00,557.50 C979.66,560.86 984.25,565.57 987.50,570.00 C990.40,573.96 992.77,578.20 994.00,582.50 C995.16,586.55 995.94,590.98 995.00,595.00 C993.98,599.34 989.17,602.80 987.50,607.50 C985.66,612.68 986.48,619.93 985.00,625.00 C983.78,629.19 983.04,632.85 980.00,636.00 C975.87,640.29 967.98,645.00 960.00,646.00 C949.34,647.33 934.00,640.33 921.00,637.50 L921.00,593.75 L981.00,566.00"/>
<path d="M876.7,562.5 L928.75,575.00 L930.00,577.50 C915.00,575.83 896.96,571.92 885.00,572.50 C876.96,572.89 872.31,574.92 865.00,576.70 C855.98,578.89 844.71,583.53 835.00,585.00 C826.16,586.34 817.80,585.53 809.20,585.80"/>
<path d="M809.2,585.8 C804.47,585.53 799.31,584.76 795.00,585.00 C791.36,585.20 788.02,585.35 785.00,586.70 C781.91,588.08 779.06,590.39 776.70,593.30 C773.89,596.76 770.83,602.45 770.00,606.70 C769.32,610.18 770.11,613.17 770.80,616.70 C771.61,620.86 772.90,625.96 775.00,630.00 C777.08,633.99 779.41,638.31 783.30,640.80 C787.88,643.73 796.04,643.99 801.70,645.00 C806.47,645.85 811.66,647.04 815.00,646.70 C817.10,646.49 818.03,646.04 820.00,645.00 C823.49,643.16 828.19,636.45 833.30,635.00 C838.68,633.47 845.15,635.54 851.70,636.70 C859.45,638.07 868.37,641.08 876.70,643.30 C885.04,645.52 893.44,648.91 901.70,650.00 C909.53,651.03 917.61,651.09 925.00,650.00 C932.00,648.97 938.50,644.58 945.00,644.00 C950.97,643.47 957.51,645.03 962.50,646.00 C966.33,646.74 968.59,647.25 972.50,648.75 C978.59,651.09 987.79,657.75 995.00,660.00 C1001.04,661.89 1006.29,662.40 1012.50,662.50 C1019.52,662.61 1027.47,662.06 1035.00,660.00 C1043.29,657.73 1054.47,653.43 1060.00,648.75 C1063.88,645.46 1064.57,640.84 1067.50,637.50 C1070.41,634.18 1075.55,632.01 1077.50,628.75 C1079.10,626.07 1079.13,623.76 1079.50,620.00 C1080.15,613.42 1081.12,599.13 1078.75,592.50 C1077.14,588.00 1072.95,585.70 1071.00,582.50 C1069.42,579.91 1069.35,577.64 1067.50,575.00 C1064.79,571.14 1060.03,567.00 1055.00,562.50 C1048.23,556.44 1037.84,547.52 1030.00,542.50 C1023.87,538.58 1018.33,536.67 1012.50,533.75"/>
<path d="M809.2,585.8 C814.47,595.53 822.49,608.09 825.00,615.00 C826.27,618.49 825.48,621.03 826.70,623.30 C827.82,625.38 829.28,626.56 831.70,628.30 C836.00,631.40 844.55,635.33 851.70,638.30 C859.46,641.53 867.39,643.34 876.70,646.70 C888.69,651.03 904.89,657.96 917.50,662.50 C928.22,666.36 937.16,670.62 947.50,672.50 C957.98,674.41 970.65,671.61 980.00,673.75 C987.66,675.51 994.54,678.20 1000.00,682.50 C1005.31,686.69 1009.78,694.25 1012.50,699.00 C1014.31,702.17 1015.46,704.19 1016.00,707.50 C1016.69,711.73 1015.33,717.50 1015.00,722.50 L1010.00,705.00 C1009.67,708.33 1010.16,712.23 1009.00,715.00 C1007.98,717.44 1005.67,719.00 1004.00,721.00 L1006.00,737.50 L1000.00,729.00 C995.83,731.00 992.39,733.36 987.50,735.00 C981.20,737.10 972.72,739.27 965.00,739.50 C956.91,739.74 948.13,736.29 940.00,736.00 C932.32,735.72 925.79,738.81 917.50,737.50 C906.41,735.74 889.09,727.62 880.00,722.50 C874.16,719.22 872.38,715.50 866.70,712.50 C858.64,708.24 845.43,705.21 835.00,701.70 C824.87,698.29 814.97,693.94 805.00,691.70 C795.54,689.58 784.78,690.35 776.70,688.30 C770.28,686.68 765.14,684.31 760.00,681.70 C755.19,679.26 749.75,677.31 746.70,673.30 C743.50,669.10 741.83,661.95 741.70,656.70 C741.58,652.01 742.79,647.97 745.00,643.30 C747.98,637.01 754.77,630.78 760.00,623.30 C766.33,614.23 773.33,602.77 780.00,592.50 L809.20,585.80"/>
</g>
<g fill="none" stroke-linejoin="round">
<g stroke="#50709a" stroke-width="3.1"><path d="M888.8,500.0 C884.17,504.17 879.73,508.38 875.00,512.50 C870.15,516.72 866.02,521.76 860.00,525.00 C853.04,528.74 844.40,531.71 835.00,532.50 C823.32,533.48 808.13,528.98 795.00,527.50 C782.31,526.07 771.34,524.05 757.50,523.75 C740.39,523.38 718.38,524.30 700.00,527.00 C682.63,529.55 665.34,533.80 650.00,539.00 C636.15,543.69 623.34,548.53 611.70,556.00 C600.00,563.51 588.65,573.24 580.00,584.00 C571.47,594.61 564.63,608.06 560.00,620.00 C555.89,630.62 553.12,641.20 552.50,651.70 C551.90,661.86 553.03,672.55 556.00,682.00 C558.92,691.30 563.85,700.28 570.00,708.00 C576.39,716.02 585.22,723.24 594.00,729.00 C602.73,734.73 611.02,739.26 622.50,742.50 C638.04,746.89 660.61,748.31 680.00,748.75 C699.77,749.20 721.43,745.75 740.00,745.00 C756.07,744.36 773.70,742.94 785.00,744.20 C791.98,744.98 795.69,746.18 801.70,748.30 C809.32,750.99 820.64,755.08 826.70,760.00 C831.40,763.82 836.01,769.01 836.70,773.30 C837.25,776.72 835.32,780.35 833.30,783.30 C831.06,786.58 826.63,788.90 823.30,791.70 C828.87,791.40 834.32,792.19 840.00,790.80 C846.51,789.20 854.24,786.14 860.00,781.70 C865.98,777.09 871.98,770.00 875.00,763.30 C877.79,757.11 878.54,749.27 878.30,743.30 C878.10,738.39 876.55,734.50 875.00,730.00 C873.30,725.08 871.41,720.56 868.30,715.00 C863.93,707.20 856.92,696.30 850.00,688.30 C843.27,680.52 836.04,673.98 827.50,667.50 C817.97,660.27 806.48,653.28 795.00,647.50 C783.19,641.56 770.15,636.48 757.50,632.50 C745.15,628.61 731.88,625.37 720.00,623.75 C709.51,622.32 701.49,622.22 690.00,622.50 C674.41,622.88 653.33,625.83 635.00,627.50 C653.33,624.58 674.39,619.33 690.00,618.75 C701.47,618.32 709.80,620.43 720.00,621.25 C730.62,622.10 741.66,623.54 752.50,623.75 C763.33,623.96 774.05,624.06 785.00,622.50 C796.53,620.85 809.70,618.49 820.00,613.75 C829.50,609.38 837.09,602.45 845.00,596.00 C852.93,589.54 861.60,582.89 867.50,575.00 C873.12,567.48 876.71,558.91 880.00,550.00 C883.47,540.63 886.10,529.05 887.50,520.00 C888.63,512.72 888.33,506.67 888.75,500.00"/></g>
<g stroke="#2a7bd4" stroke-width="2.1"><path d="M888.8,500.0 C884.17,504.17 879.73,508.38 875.00,512.50 C870.15,516.72 866.02,521.76 860.00,525.00 C853.04,528.74 844.40,531.71 835.00,532.50 C823.32,533.48 808.13,528.98 795.00,527.50 C782.31,526.07 771.34,524.05 757.50,523.75 C740.39,523.38 718.38,524.30 700.00,527.00 C682.63,529.55 665.34,533.80 650.00,539.00 C636.15,543.69 623.34,548.53 611.70,556.00 C600.00,563.51 588.65,573.24 580.00,584.00 C571.47,594.61 564.63,608.06 560.00,620.00 C555.89,630.62 553.12,641.20 552.50,651.70 C551.90,661.86 553.03,672.55 556.00,682.00 C558.92,691.30 563.85,700.28 570.00,708.00 C576.39,716.02 585.22,723.24 594.00,729.00 C602.73,734.73 611.02,739.26 622.50,742.50 C638.04,746.89 660.61,748.31 680.00,748.75 C699.77,749.20 721.43,745.75 740.00,745.00 C756.07,744.36 773.70,742.94 785.00,744.20 C791.98,744.98 795.69,746.18 801.70,748.30 C809.32,750.99 820.64,755.08 826.70,760.00 C831.40,763.82 836.01,769.01 836.70,773.30 C837.25,776.72 835.32,780.35 833.30,783.30 C831.06,786.58 826.63,788.90 823.30,791.70 C828.87,791.40 834.32,792.19 840.00,790.80 C846.51,789.20 854.24,786.14 860.00,781.70 C865.98,777.09 871.98,770.00 875.00,763.30 C877.79,757.11 878.54,749.27 878.30,743.30 C878.10,738.39 876.55,734.50 875.00,730.00 C873.30,725.08 871.41,720.56 868.30,715.00 C863.93,707.20 856.92,696.30 850.00,688.30 C843.27,680.52 836.04,673.98 827.50,667.50 C817.97,660.27 806.48,653.28 795.00,647.50 C783.19,641.56 770.15,636.48 757.50,632.50 C745.15,628.61 731.88,625.37 720.00,623.75 C709.51,622.32 701.49,622.22 690.00,622.50 C674.41,622.88 653.33,625.83 635.00,627.50 C653.33,624.58 674.39,619.33 690.00,618.75 C701.47,618.32 709.80,620.43 720.00,621.25 C730.62,622.10 741.66,623.54 752.50,623.75 C763.33,623.96 774.05,624.06 785.00,622.50 C796.53,620.85 809.70,618.49 820.00,613.75 C829.50,609.38 837.09,602.45 845.00,596.00 C852.93,589.54 861.60,582.89 867.50,575.00 C873.12,567.48 876.71,558.91 880.00,550.00 C883.47,540.63 886.10,529.05 887.50,520.00 C888.63,512.72 888.33,506.67 888.75,500.00"/></g>
</g>
</svg></div>

<!-- RIGHT DOCK -->
<div class="a" style="left:1594px;top:60px;width:326px;height:12px;background:#424242"></div>
<div class="a" style="left:1595px;top:72px;width:37px;height:68px;background:#535353"></div>
<div class="a" style="left:1595px;top:141px;width:37px;height:68px;background:#535353"></div>
<div class="a" style="left:1595px;top:210px;width:37px;height:68px;background:#535353"></div>
<div class="a" style="left:1632px;top:72px;width:2px;height:206px;background:#383838"></div><div class="a" style="left:1633px;top:278px;width:1px;height:802px;background:#242424"></div>
<svg class="a" style="left:1619px;top:63px" width="8" height="6"><path d="M3,0.5 L1,2.5 L3,4.5 M6.5,0.5 L4.5,2.5 L6.5,4.5" fill="none" stroke="#d0d0d0" stroke-width="1.3"/></svg>
<svg class="a" style="left:1906px;top:63px" width="8" height="6"><path d="M0.5,0.5 L2.5,2.5 L0.5,4.5 M4,0.5 L6,2.5 L4,4.5" fill="none" stroke="#d0d0d0" stroke-width="1.3"/></svg>
<svg class="a" style="left:1594px;top:72px" width="40" height="210" viewBox="1594 72 40 210">
<g fill="#3c3c3c"><rect x="1604" y="75" width="1" height="4"/><rect x="1606" y="75" width="1" height="4"/><rect x="1608" y="75" width="1" height="4"/><rect x="1610" y="75" width="1" height="4"/><rect x="1612" y="75" width="1" height="4"/><rect x="1614" y="75" width="1" height="4"/><rect x="1616" y="75" width="1" height="4"/><rect x="1618" y="75" width="1" height="4"/><rect x="1620" y="75" width="1" height="4"/><rect x="1622" y="75" width="1" height="4"/><rect x="1604" y="144" width="1" height="4"/><rect x="1606" y="144" width="1" height="4"/><rect x="1608" y="144" width="1" height="4"/><rect x="1610" y="144" width="1" height="4"/><rect x="1612" y="144" width="1" height="4"/><rect x="1614" y="144" width="1" height="4"/><rect x="1616" y="144" width="1" height="4"/><rect x="1618" y="144" width="1" height="4"/><rect x="1620" y="144" width="1" height="4"/><rect x="1622" y="144" width="1" height="4"/><rect x="1604" y="213" width="1" height="4"/><rect x="1606" y="213" width="1" height="4"/><rect x="1608" y="213" width="1" height="4"/><rect x="1610" y="213" width="1" height="4"/><rect x="1612" y="213" width="1" height="4"/><rect x="1614" y="213" width="1" height="4"/><rect x="1616" y="213" width="1" height="4"/><rect x="1618" y="213" width="1" height="4"/><rect x="1620" y="213" width="1" height="4"/><rect x="1622" y="213" width="1" height="4"/></g>
<g fill="#dcdcdc">
 <rect x="1604" y="87" width="2" height="2"/><rect x="1604" y="90" width="2" height="2"/><rect x="1604" y="93" width="2" height="2"/>
 <rect x="1607" y="87.2" width="4" height="1.2"/><rect x="1607" y="90.2" width="4" height="1.2"/><rect x="1607" y="93.2" width="4" height="1.2"/>
</g>
<path d="M1615,99 L1623.5,91" stroke="#dcdcdc" stroke-width="2.6" stroke-linecap="round"/>
<path d="M1613,98 Q1616,99.5 1614.5,102 Q1612.5,104.5 1608,104.5 Q1610.5,102.5 1610.5,100.5 Q1611,98 1613,98Z" fill="#dcdcdc"/>
<g fill="#dcdcdc">
 <path d="M1605,118 Q1608,115.5 1612,116 Q1614,117 1614,118 Q1614,119.5 1612,120.5 Q1608,121 1605,118Z"/>
 <rect x="1614" y="117.3" width="9" height="1.8"/>
 <rect x="1607" y="126" width="9" height="1.8"/>
 <path d="M1616,127 L1622,122.5 Q1624.5,126 1622,131Z"/>
</g>
<path d="M1608.6,170 L1614,158 L1619.4,170 M1610.6,165.6 H1617.4" fill="none" stroke="#dcdcdc" stroke-width="1.3"/>
<rect x="1621" y="155.5" width="1" height="17" fill="#dcdcdc"/>
<path d="M1615,184 H1620.5 V198 H1619 V185.5 H1617.5 V198 H1616 V192 Q1610,192 1610,188 Q1610,184 1615,184Z" fill="#dcdcdc"/>
<rect x="1608" y="226" width="14" height="15" fill="#dcdcdc"/>
<g fill="#535353"><rect x="1610" y="228" width="5" height="1.3"/><rect x="1610" y="230.5" width="5" height="1.3"/><rect x="1610" y="233" width="5" height="1.3"/><rect x="1616.5" y="228" width="3.5" height="6"/><rect x="1610" y="235.5" width="10" height="3.5"/></g>
<path d="M1608,254 H1622 V264.5 H1616 V270 H1608Z" fill="#dcdcdc"/><path d="M1617,265.5 H1622 L1617,270.5Z" fill="#dcdcdc"/><g fill="#535353"><rect x="1610" y="257.5" width="9" height="1.2"/><rect x="1610" y="259.8" width="9" height="1.2"/><rect x="1610" y="262" width="9" height="1.2"/><rect x="1610" y="264.2" width="4" height="1.2"/></g>
</svg>

<!-- PROPERTIES -->
<div class="a" style="left:1594px;top:71px;width:326px;height:1px;background:#383838"></div>
<div class="a" style="left:1634px;top:72px;width:285px;height:38px;background:#383838"></div>
<div class="a" style="left:1634px;top:72px;width:285px;height:16px;background:#424242"></div>
<div class="a" style="left:1634px;top:89px;width:285px;height:1px;background:#4d4d4d"></div>
<div class="a" style="left:1634px;top:91px;width:285px;height:1px;background:#474747"></div>
<div class="a" style="left:1635px;top:72px;width:63px;height:18px;background:#535353"></div>
<div class="a" style="left:1698px;top:72px;width:75px;height:16px;background:#3f3f3f;border-left:1px solid #383838;border-right:1px solid #383838"></div>
<div class="ptab" style="left:1642px;top:76px;color:#f2f2f2">Properties</div>
<div class="ptab" style="left:1705px;top:76px;color:#b4b4b4">Adjustments</div>
<!-- HISTORY -->
<div class="a" style="left:1634px;top:93px;width:285px;height:16px;background:#424242"></div>
<div class="a" style="left:1635px;top:93px;width:50px;height:17px;background:#535353"></div>
<div class="a" style="left:1685px;top:93px;width:52px;height:16px;background:#3f3f3f;border-left:1px solid #383838;border-right:1px solid #383838"></div>
<div class="ptab" style="left:1642px;top:96px;color:#f2f2f2">History</div>
<div class="ptab" style="left:1692px;top:96px;color:#b4b4b4">Actions</div>
<div class="a" style="left:1634px;top:110px;width:285px;height:200px;background:#535353"></div><svg class="a" style="left:1903px;top:77px" width="10" height="8"><g fill="#d8d8d8"><rect y="0" width="10" height="1.1"/><rect y="2" width="10" height="1.1"/><rect y="4" width="10" height="1.1"/><rect y="6" width="10" height="1.1"/></g></svg><svg class="a" style="left:1903px;top:98px" width="10" height="8"><g fill="#d8d8d8"><rect y="0" width="10" height="1.1"/><rect y="2" width="10" height="1.1"/><rect y="4" width="10" height="1.1"/><rect y="6" width="10" height="1.1"/></g></svg><div class="a" style="left:1634px;top:114px;width:269px;height:196px;overflow:hidden"><div class="a" style="left:1px;top:-11px;width:268px;height:23px;background:#535353;border-bottom:1px solid #474747"></div><div class="a" style="left:7px;top:-5px;width:12px;height:12px;border-left:1px solid #4c4c4c;border-top:1px solid #4c4c4c;border-right:1px solid #6c6c6c;border-bottom:1px solid #6c6c6c"></div><svg class="a" style="left:33px;top:-6px" width="14" height="15"><rect x="0" y="0" width="9" height="2" fill="#e6e6e6"/><rect x="0" y="2" width="14" height="13" fill="#e6e6e6"/><rect x="1.3" y="3.3" width="11.4" height="10.4" fill="#4a4a4a"/><g fill="#e6e6e6"><rect x="2" y="5" width="10" height="1"/><rect x="2" y="7" width="10" height="1"/><rect x="2" y="9" width="10" height="1"/><rect x="2" y="11" width="10" height="1"/></g></svg><div class="t" style="left:59px;top:-5px;font-size:10px;color:#f0f0f0">Drag Anchor Point</div><div class="a" style="left:1px;top:12px;width:268px;height:23px;background:#535353;border-bottom:1px solid #474747"></div><div class="a" style="left:7px;top:18px;width:12px;height:12px;border-left:1px solid #4c4c4c;border-top:1px solid #4c4c4c;border-right:1px solid #6c6c6c;border-bottom:1px solid #6c6c6c"></div><svg class="a" style="left:33px;top:17px" width="14" height="15"><rect x="0" y="0" width="9" height="2" fill="#e6e6e6"/><rect x="0" y="2" width="14" height="13" fill="#e6e6e6"/><rect x="1.3" y="3.3" width="11.4" height="10.4" fill="#4a4a4a"/><g fill="#e6e6e6"><rect x="2" y="5" width="10" height="1"/><rect x="2" y="7" width="10" height="1"/><rect x="2" y="9" width="10" height="1"/><rect x="2" y="11" width="10" height="1"/></g></svg><div class="t" style="left:59px;top:18px;font-size:10px;color:#f0f0f0">Drag Anchor Point</div><div class="a" style="left:1px;top:35px;width:268px;height:23px;background:#535353;border-bottom:1px solid #474747"></div><div class="a" style="left:7px;top:41px;width:12px;height:12px;border-left:1px solid #4c4c4c;border-top:1px solid #4c4c4c;border-right:1px solid #6c6c6c;border-bottom:1px solid #6c6c6c"></div><svg class="a" style="left:33px;top:40px" width="14" height="15"><rect x="0" y="0" width="9" height="2" fill="#e6e6e6"/><rect x="0" y="2" width="14" height="13" fill="#e6e6e6"/><rect x="1.3" y="3.3" width="11.4" height="10.4" fill="#4a4a4a"/><g fill="#e6e6e6"><rect x="2" y="5" width="10" height="1"/><rect x="2" y="7" width="10" height="1"/><rect x="2" y="9" width="10" height="1"/><rect x="2" y="11" width="10" height="1"/></g></svg><div class="t" style="left:59px;top:41px;font-size:10px;color:#f0f0f0">Delete Anchor Point</div><div class="a" style="left:1px;top:58px;width:268px;height:23px;background:#535353;border-bottom:1px solid #474747"></div><div class="a" style="left:7px;top:64px;width:12px;height:12px;border-left:1px solid #4c4c4c;border-top:1px solid #4c4c4c;border-right:1px solid #6c6c6c;border-bottom:1px solid #6c6c6c"></div><svg class="a" style="left:33px;top:63px" width="14" height="15"><rect x="0" y="0" width="9" height="2" fill="#e6e6e6"/><rect x="0" y="2" width="14" height="13" fill="#e6e6e6"/><rect x="1.3" y="3.3" width="11.4" height="10.4" fill="#4a4a4a"/><g fill="#e6e6e6"><rect x="2" y="5" width="10" height="1"/><rect x="2" y="7" width="10" height="1"/><rect x="2" y="9" width="10" height="1"/><rect x="2" y="11" width="10" height="1"/></g></svg><div class="t" style="left:59px;top:64px;font-size:10px;color:#f0f0f0">Drag Control Point</div><div class="a" style="left:1px;top:81px;width:268px;height:23px;background:#535353;border-bottom:1px solid #474747"></div><div class="a" style="left:7px;top:87px;width:12px;height:12px;border-left:1px solid #4c4c4c;border-top:1px solid #4c4c4c;border-right:1px solid #6c6c6c;border-bottom:1px solid #6c6c6c"></div><svg class="a" style="left:33px;top:86px" width="14" height="15"><rect x="0" y="0" width="9" height="2" fill="#e6e6e6"/><rect x="0" y="2" width="14" height="13" fill="#e6e6e6"/><rect x="1.3" y="3.3" width="11.4" height="10.4" fill="#4a4a4a"/><g fill="#e6e6e6"><rect x="2" y="5" width="10" height="1"/><rect x="2" y="7" width="10" height="1"/><rect x="2" y="9" width="10" height="1"/><rect x="2" y="11" width="10" height="1"/></g></svg><div class="t" style="left:59px;top:87px;font-size:10px;color:#f0f0f0">Drag Control Point</div><div class="a" style="left:1px;top:104px;width:268px;height:23px;background:#535353;border-bottom:1px solid #474747"></div><div class="a" style="left:7px;top:110px;width:12px;height:12px;border-left:1px solid #4c4c4c;border-top:1px solid #4c4c4c;border-right:1px solid #6c6c6c;border-bottom:1px solid #6c6c6c"></div><svg class="a" style="left:33px;top:109px" width="14" height="15"><rect x="0" y="0" width="9" height="2" fill="#e6e6e6"/><rect x="0" y="2" width="14" height="13" fill="#e6e6e6"/><rect x="1.3" y="3.3" width="11.4" height="10.4" fill="#4a4a4a"/><g fill="#e6e6e6"><rect x="2" y="5" width="10" height="1"/><rect x="2" y="7" width="10" height="1"/><rect x="2" y="9" width="10" height="1"/><rect x="2" y="11" width="10" height="1"/></g></svg><div class="t" style="left:59px;top:110px;font-size:10px;color:#f0f0f0">Drag Anchor Point</div><div class="a" style="left:1px;top:127px;width:268px;height:23px;background:#535353;border-bottom:1px solid #474747"></div><div class="a" style="left:7px;top:133px;width:12px;height:12px;border-left:1px solid #4c4c4c;border-top:1px solid #4c4c4c;border-right:1px solid #6c6c6c;border-bottom:1px solid #6c6c6c"></div><svg class="a" style="left:33px;top:132px" width="14" height="15"><rect x="0" y="0" width="9" height="2" fill="#e6e6e6"/><rect x="0" y="2" width="14" height="13" fill="#e6e6e6"/><rect x="1.3" y="3.3" width="11.4" height="10.4" fill="#4a4a4a"/><g fill="#e6e6e6"><rect x="2" y="5" width="10" height="1"/><rect x="2" y="7" width="10" height="1"/><rect x="2" y="9" width="10" height="1"/><rect x="2" y="11" width="10" height="1"/></g></svg><div class="t" style="left:59px;top:133px;font-size:10px;color:#f0f0f0">Drag Control Point</div><div class="a" style="left:1px;top:150px;width:268px;height:23px;background:#535353;border-bottom:1px solid #474747"></div><div class="a" style="left:7px;top:156px;width:12px;height:12px;border-left:1px solid #4c4c4c;border-top:1px solid #4c4c4c;border-right:1px solid #6c6c6c;border-bottom:1px solid #6c6c6c"></div><svg class="a" style="left:33px;top:155px" width="14" height="15"><rect x="0" y="0" width="9" height="2" fill="#e6e6e6"/><rect x="0" y="2" width="14" height="13" fill="#e6e6e6"/><rect x="1.3" y="3.3" width="11.4" height="10.4" fill="#4a4a4a"/><g fill="#e6e6e6"><rect x="2" y="5" width="10" height="1"/><rect x="2" y="7" width="10" height="1"/><rect x="2" y="9" width="10" height="1"/><rect x="2" y="11" width="10" height="1"/></g></svg><div class="t" style="left:59px;top:156px;font-size:10px;color:#f0f0f0">Drag Control Point</div><div class="a" style="left:1px;top:173px;width:268px;height:23px;background:#6a6a6a;border-bottom:1px solid #474747"></div><div class="a" style="left:7px;top:179px;width:12px;height:12px;border-left:1px solid #4c4c4c;border-top:1px solid #4c4c4c;border-right:1px solid #6c6c6c;border-bottom:1px solid #6c6c6c"></div><svg class="a" style="left:33px;top:178px" width="14" height="15"><rect x="0" y="0" width="9" height="2" fill="#e6e6e6"/><rect x="0" y="2" width="14" height="13" fill="#e6e6e6"/><rect x="1.3" y="3.3" width="11.4" height="10.4" fill="#4a4a4a"/><g fill="#e6e6e6"><rect x="2" y="5" width="10" height="1"/><rect x="2" y="7" width="10" height="1"/><rect x="2" y="9" width="10" height="1"/><rect x="2" y="11" width="10" height="1"/></g></svg><div class="t" style="left:59px;top:179px;font-size:10px;color:#f0f0f0">Drag Anchor Point (Save)</div></div><div class="a" style="left:1903px;top:115px;width:16px;height:195px;background:#4a4a4a"></div><div class="a" style="left:1905px;top:268px;width:12px;height:26px;background:#6a6a6a"></div><svg class="a" style="left:1907px;top:122px" width="9" height="6"><path d="M0.5,5 L4.5,1 L8.5,5" fill="none" stroke="#8a8a8a" stroke-width="1.1"/></svg><svg class="a" style="left:1907px;top:298px" width="9" height="6"><path d="M0.5,1 L4.5,5 L8.5,1" fill="none" stroke="#8a8a8a" stroke-width="1.1"/></svg>
<div class="a" style="left:1634px;top:310px;width:285px;height:1px;background:#3a3a3a"></div><div class="a" style="left:1634px;top:311px;width:285px;height:24px;background:#535353"></div><svg class="a" style="left:1817px;top:316px" width="16" height="14"><path d="M5,1 H10 L12,3 V10 H5Z" fill="#dcdcdc"/><path d="M10,1 V3 H12" fill="none" stroke="#535353" stroke-width="0.8"/><rect x="0" y="6.5" width="8" height="2" fill="#dcdcdc" stroke="#535353" stroke-width="0.8"/><rect x="3" y="3.5" width="2" height="8" fill="#dcdcdc" stroke="#535353" stroke-width="0.8"/><rect x="0.4" y="6.9" width="7.2" height="1.2" fill="#dcdcdc"/><rect x="3.4" y="3.9" width="1.2" height="7.2" fill="#dcdcdc"/></svg>
<svg class="a" style="left:1851px;top:316px" width="14" height="12"><path d="M0,3 H3.5 L5,1 H9 L10.5,3 H14 V11.5 H0Z" fill="#dcdcdc"/><circle cx="7" cy="7" r="2.8" fill="#535353"/><circle cx="7" cy="7" r="1.4" fill="#dcdcdc"/></svg>
<svg class="a" style="left:1879px;top:316px" width="12" height="14"><path d="M0.5,3 H11.5 M4,3 V1.5 H8 V3" fill="none" stroke="#dcdcdc" stroke-width="1.1"/><path d="M1.8,4 H10.2 L9.8,13.2 H2.2Z" fill="none" stroke="#dcdcdc" stroke-width="1.2"/><path d="M4.3,5.5 V11.5 M6,5.5 V11.5 M7.7,5.5 V11.5" stroke="#dcdcdc" stroke-width="0.9"/></svg>

<!-- LAYERS -->
<div class="a" style="left:1634px;top:337px;width:285px;height:18px;background:#424242"></div>
<div class="a" style="left:1635px;top:337px;width:44px;height:18px;background:#535353"></div>
<div class="ptab" style="left:1642px;top:341px;color:#f2f2f2">Layers</div>
<div class="ptab" style="left:1686px;top:341px;color:#b4b4b4">Channels</div>
<div class="ptab" style="left:1744px;top:341px;color:#b4b4b4">Paths</div>
<div class="a" style="left:1634px;top:355px;width:285px;height:691px;background:#535353"></div><svg class="a" style="left:1903px;top:343px" width="10" height="8"><g fill="#d8d8d8"><rect y="0" width="10" height="1.1"/><rect y="2" width="10" height="1.1"/><rect y="4" width="10" height="1.1"/><rect y="6" width="10" height="1.1"/></g></svg><div class="a" style="left:1634px;top:386px;width:285px;height:1px;background:#474747"></div>
<div class="a" style="left:1634px;top:414px;width:285px;height:1px;background:#474747"></div>
<div class="field" style="left:1639px;top:363px;width:87px;height:21px;border-radius:3px"></div>
<svg class="a" style="left:1647px;top:368px" width="12" height="13"><circle cx="7" cy="5" r="3.8" fill="none" stroke="#dcdcdc" stroke-width="1.3"/><path d="M4.5,7.8 L1,11.5" stroke="#dcdcdc" stroke-width="1.8" stroke-linecap="round"/></svg>
<div class="t" style="left:1661px;top:369px;font-size:10px;color:#f0f0f0">Kind</div>
<div class="chev" style="left:1715px;top:370px;width:5px;height:5px;border-color:#c8c8c8"></div>
<svg class="a" style="left:1736px;top:367px" width="14" height="12"><rect x="1.6" y="1.6" width="10.8" height="8.8" fill="none" stroke="#dcdcdc" stroke-width="1.1"/><path d="M3,9 L4.5,6 L5.5,7.5 L7,5 L8.5,7 L10,5.8 L11,9Z" fill="#dcdcdc"/></svg>
<svg class="a" style="left:1761px;top:367px" width="13" height="13"><circle cx="6.5" cy="6.5" r="5" fill="none" stroke="#dcdcdc" stroke-width="1.1"/><path d="M10.1,2.9 A5,5 0 0 1 2.9,10.1Z" fill="#dcdcdc"/></svg>
<svg class="a" style="left:1786px;top:368px" width="12" height="12"><path d="M0.8,0.8 H11 V3.8 H10.2 Q9.8,2.3 8.5,2.3 H6.8 V10 H8.3 V11 H3.5 V10 H5 V2.3 H3.3 Q2,2.3 1.6,3.8 H0.8Z" fill="#dcdcdc"/></svg>
<svg class="a" style="left:1809px;top:367px" width="13" height="13"><rect x="2" y="2" width="9" height="9" fill="none" stroke="#dcdcdc" stroke-width="1.1"/><g fill="#535353" stroke="#dcdcdc" stroke-width="1"><circle cx="2" cy="2" r="1.3"/><circle cx="11" cy="2" r="1.3"/><circle cx="2" cy="11" r="1.3"/><circle cx="11" cy="11" r="1.3"/></g></svg>
<svg class="a" style="left:1834px;top:367px" width="12" height="14"><path d="M3.5,1 H7.8 L10.6,3.8 V12.4 H3.5Z" fill="none" stroke="#dcdcdc" stroke-width="1.1"/><path d="M7.8,1 V3.8 H10.6" fill="none" stroke="#dcdcdc" stroke-width="0.9"/><rect x="0.8" y="6.4" width="5.6" height="6.4" fill="#dcdcdc"/></svg>
<div class="a" style="left:1857px;top:364px;width:10px;height:18px;border-radius:5px;background:#474747;border:1px solid #5a5a5a"></div>
<div class="a" style="left:1858px;top:364px;width:8px;height:8px;border-radius:4px;background:#dcdcdc"></div>
<div class="field" style="left:1639px;top:391px;width:127px;height:21px;border-radius:3px"></div>
<div class="t" style="left:1647px;top:397px;font-size:10px;color:#f0f0f0">Normal</div>
<div class="chev" style="left:1755px;top:397px;width:5px;height:5px;border-color:#c8c8c8"></div>
<div class="t" style="left:1773px;top:396.5px;font-size:10px;color:#e0e0e0">Opacity:</div>
<div class="field" style="left:1814px;top:392px;width:52px;height:18px;border-radius:3px"></div>
<div class="a" style="left:1849px;top:393px;width:1px;height:16px;background:#3a3a3a"></div>
<div class="t" style="left:1818px;top:397px;font-size:10px;color:#f0f0f0">100%</div>
<div class="chev" style="left:1854px;top:396px;width:5px;height:5px;border-color:#c8c8c8"></div>
<div class="t" style="left:1641px;top:425px;font-size:10px;color:#e0e0e0">Lock:</div>
<svg class="a" style="left:1674px;top:423px" width="11" height="11"><rect x="0" y="0" width="11" height="11" fill="#8e8e8e"/><g fill="#4e4e4e"><rect x="1" y="1" width="3" height="3"/><rect x="7" y="1" width="3" height="3"/><rect x="4" y="4" width="3" height="3"/><rect x="1" y="7" width="3" height="3"/><rect x="7" y="7" width="3" height="3"/></g></svg>
<svg class="a" style="left:1694px;top:422px" width="16" height="15"><path d="M8,7.5 L13.5,1.5 Q14.5,1 14,2.3 L9.3,8.8Z" fill="#8a8a8a"/><path d="M6.8,7.8 Q9.5,8.5 8.3,11.2 Q6.8,13.8 1,14 Q3,12.5 3.6,10.5 Q4.5,8 6.8,7.8Z" fill="#8a8a8a"/></svg>
<svg class="a" style="left:1717px;top:422px" width="13" height="14"><path d="M6.5,1.5 V12.5 M1.5,7 H11.5" stroke="#dcdcdc" stroke-width="1.3"/><path d="M6.5,0 L9,2.8 H4Z M6.5,14 L9,11.2 H4Z M0,7 L2.8,4.5 V9.5Z M13,7 L10.2,4.5 V9.5Z" fill="#dcdcdc"/></svg>
<svg class="a" style="left:1737px;top:422px" width="17" height="15"><path d="M3.8,4.2 H9.6 L12.2,7.2 V11.6 H3.8Z" fill="none" stroke="#dcdcdc" stroke-width="1.2"/><path d="M9.6,4.2 V7.2 H12.2" fill="none" stroke="#dcdcdc" stroke-width="1"/><g fill="#dcdcdc"><rect x="3.2" y="1.5" width="1.2" height="1.6"/><rect x="0.5" y="3.6" width="1.6" height="1.2"/><rect x="3.2" y="12.7" width="1.2" height="1.6"/><rect x="0.5" y="11" width="1.6" height="1.2"/><rect x="11.6" y="12.7" width="1.2" height="1.6"/><rect x="13.3" y="11" width="1.6" height="1.2"/><rect x="11.8" y="1.6" width="1" height="1"/><rect x="13.2" y="3" width="1" height="1"/></g></svg>
<svg class="a" style="left:1762px;top:422px" width="12" height="14"><path d="M3.3,6 V4.5 A2.7,2.7 0 0 1 8.7,4.5 V6" fill="none" stroke="#dcdcdc" stroke-width="1.5"/><rect x="1" y="5.5" width="10" height="7.6" fill="#dcdcdc"/><circle cx="6" cy="9" r="1.1" fill="#535353"/></svg>
<div class="t" style="left:1795px;top:425px;font-size:10px;color:#e0e0e0">Fill:</div>
<div class="field" style="left:1814px;top:421px;width:52px;height:17px;border-radius:3px"></div>
<div class="a" style="left:1849px;top:422px;width:1px;height:15px;background:#3a3a3a"></div>
<div class="t" style="left:1818px;top:425px;font-size:10px;color:#f0f0f0">100%</div>
<div class="chev" style="left:1854px;top:424px;width:5px;height:5px;border-color:#c8c8c8"></div>
<div class="a" style="left:1635px;top:444px;width:268px;height:602px;overflow:hidden"><div class="a" style="left:0;top:1px;width:268px;height:40px;background:#535353;border-bottom:1px solid #464646"></div><div class="a" style="left:30px;top:1px;width:238px;height:39px;background:#6a6a6a"></div><div class="a" style="left:0;top:41px;width:268px;height:1px;background:#5a5a5a"></div><div class="a" style="left:29px;top:1px;width:1px;height:41px;background:#474747"></div><svg class="a" style="left:8px;top:18px" width="15" height="10"><path d="M0.5,5 Q7.5,-2.5 14.5,5 Q7.5,12.5 0.5,5Z" fill="#dcdcdc"/><circle cx="7.5" cy="5" r="3.3" fill="#4a4a4a"/><circle cx="8.5" cy="3.8" r="0.9" fill="#dcdcdc"/></svg><svg class="a" style="left:34px;top:5px" width="25" height="32"><defs><clipPath id="tc5"><rect x="1" y="1" width="23" height="30"/></clipPath></defs><rect x="0" y="0" width="25" height="32" fill="#2c2c2c"/><rect x="1" y="1" width="23" height="30" fill="#707070"/><g clip-path="url(#tc5)"><g fill="#959595"><rect x="1" y="1" width="4" height="4"/><rect x="9" y="1" width="4" height="4"/><rect x="17" y="1" width="4" height="4"/><rect x="5" y="5" width="4" height="4"/><rect x="13" y="5" width="4" height="4"/><rect x="21" y="5" width="4" height="4"/><rect x="1" y="9" width="4" height="4"/><rect x="9" y="9" width="4" height="4"/><rect x="17" y="9" width="4" height="4"/><rect x="5" y="13" width="4" height="4"/><rect x="13" y="13" width="4" height="4"/><rect x="21" y="13" width="4" height="4"/><rect x="1" y="17" width="4" height="4"/><rect x="9" y="17" width="4" height="4"/><rect x="17" y="17" width="4" height="4"/><rect x="5" y="21" width="4" height="4"/><rect x="13" y="21" width="4" height="4"/><rect x="21" y="21" width="4" height="4"/><rect x="1" y="25" width="4" height="4"/><rect x="9" y="25" width="4" height="4"/><rect x="17" y="25" width="4" height="4"/><rect x="5" y="29" width="4" height="4"/><rect x="13" y="29" width="4" height="4"/><rect x="21" y="29" width="4" height="4"/></g></g><rect x="10" y="17" width="15" height="15" fill="#2c2c2c"/><rect x="11" y="18" width="13" height="13" fill="#535353"/><rect x="13.5" y="21.5" width="9.5" height="7.5" fill="none" stroke="#e8e8e8" stroke-width="1.1"/><g fill="#535353" stroke="#e8e8e8" stroke-width="1"><circle cx="13.5" cy="21.5" r="1.3"/><circle cx="23" cy="21.5" r="1.3"/><circle cx="13.5" cy="29" r="1.3"/><circle cx="23" cy="29" r="1.3"/></g></svg><svg class="a" style="left:31px;top:3px" width="31" height="37"><path d="M1,12 V1 H11 M20,1 H30 V12 M30,24 V36 H20 M11,36 H1 V24" fill="none" stroke="#fff" stroke-width="1.2"/></svg><div class="t" style="left:68px;top:17px;font-size:10.5px;color:#f0f0f0">tail</div><div class="a" style="left:0;top:42px;width:268px;height:40px;background:#535353;border-bottom:1px solid #464646"></div><div class="a" style="left:29px;top:42px;width:1px;height:41px;background:#474747"></div><svg class="a" style="left:8px;top:59px" width="15" height="10"><path d="M0.5,5 Q7.5,-2.5 14.5,5 Q7.5,12.5 0.5,5Z" fill="#dcdcdc"/><circle cx="7.5" cy="5" r="3.3" fill="#4a4a4a"/><circle cx="8.5" cy="3.8" r="0.9" fill="#dcdcdc"/></svg><svg class="a" style="left:34px;top:46px" width="25" height="32"><defs><clipPath id="tc46"><rect x="1" y="1" width="23" height="30"/></clipPath></defs><rect x="0" y="0" width="25" height="32" fill="#2c2c2c"/><rect x="1" y="1" width="23" height="30" fill="#707070"/><g clip-path="url(#tc46)"><g fill="#959595"><rect x="1" y="1" width="4" height="4"/><rect x="9" y="1" width="4" height="4"/><rect x="17" y="1" width="4" height="4"/><rect x="5" y="5" width="4" height="4"/><rect x="13" y="5" width="4" height="4"/><rect x="21" y="5" width="4" height="4"/><rect x="1" y="9" width="4" height="4"/><rect x="9" y="9" width="4" height="4"/><rect x="17" y="9" width="4" height="4"/><rect x="5" y="13" width="4" height="4"/><rect x="13" y="13" width="4" height="4"/><rect x="21" y="13" width="4" height="4"/><rect x="1" y="17" width="4" height="4"/><rect x="9" y="17" width="4" height="4"/><rect x="17" y="17" width="4" height="4"/><rect x="5" y="21" width="4" height="4"/><rect x="13" y="21" width="4" height="4"/><rect x="21" y="21" width="4" height="4"/><rect x="1" y="25" width="4" height="4"/><rect x="9" y="25" width="4" height="4"/><rect x="17" y="25" width="4" height="4"/><rect x="5" y="29" width="4" height="4"/><rect x="13" y="29" width="4" height="4"/><rect x="21" y="29" width="4" height="4"/></g></g><rect x="10" y="17" width="15" height="15" fill="#2c2c2c"/><rect x="11" y="18" width="13" height="13" fill="#535353"/><rect x="13.5" y="21.5" width="9.5" height="7.5" fill="none" stroke="#e8e8e8" stroke-width="1.1"/><g fill="#535353" stroke="#e8e8e8" stroke-width="1"><circle cx="13.5" cy="21.5" r="1.3"/><circle cx="23" cy="21.5" r="1.3"/><circle cx="13.5" cy="29" r="1.3"/><circle cx="23" cy="29" r="1.3"/></g></svg><div class="t" style="left:68px;top:58px;font-size:10.5px;color:#f0f0f0">wing</div><div class="a" style="left:0;top:83px;width:268px;height:40px;background:#535353;border-bottom:1px solid #464646"></div><div class="a" style="left:29px;top:83px;width:1px;height:41px;background:#474747"></div><svg class="a" style="left:8px;top:100px" width="15" height="10"><path d="M0.5,5 Q7.5,-2.5 14.5,5 Q7.5,12.5 0.5,5Z" fill="#dcdcdc"/><circle cx="7.5" cy="5" r="3.3" fill="#4a4a4a"/><circle cx="8.5" cy="3.8" r="0.9" fill="#dcdcdc"/></svg><svg class="a" style="left:34px;top:87px" width="25" height="32"><defs><clipPath id="tc87"><rect x="1" y="1" width="23" height="30"/></clipPath></defs><rect x="0" y="0" width="25" height="32" fill="#2c2c2c"/><rect x="1" y="1" width="23" height="30" fill="#707070"/><g clip-path="url(#tc87)"><g fill="#959595"><rect x="1" y="1" width="4" height="4"/><rect x="9" y="1" width="4" height="4"/><rect x="17" y="1" width="4" height="4"/><rect x="5" y="5" width="4" height="4"/><rect x="13" y="5" width="4" height="4"/><rect x="21" y="5" width="4" height="4"/><rect x="1" y="9" width="4" height="4"/><rect x="9" y="9" width="4" height="4"/><rect x="17" y="9" width="4" height="4"/><rect x="5" y="13" width="4" height="4"/><rect x="13" y="13" width="4" height="4"/><rect x="21" y="13" width="4" height="4"/><rect x="1" y="17" width="4" height="4"/><rect x="9" y="17" width="4" height="4"/><rect x="17" y="17" width="4" height="4"/><rect x="5" y="21" width="4" height="4"/><rect x="13" y="21" width="4" height="4"/><rect x="21" y="21" width="4" height="4"/><rect x="1" y="25" width="4" height="4"/><rect x="9" y="25" width="4" height="4"/><rect x="17" y="25" width="4" height="4"/><rect x="5" y="29" width="4" height="4"/><rect x="13" y="29" width="4" height="4"/><rect x="21" y="29" width="4" height="4"/></g></g><rect x="10" y="17" width="15" height="15" fill="#2c2c2c"/><rect x="11" y="18" width="13" height="13" fill="#535353"/><rect x="13.5" y="21.5" width="9.5" height="7.5" fill="none" stroke="#e8e8e8" stroke-width="1.1"/><g fill="#535353" stroke="#e8e8e8" stroke-width="1"><circle cx="13.5" cy="21.5" r="1.3"/><circle cx="23" cy="21.5" r="1.3"/><circle cx="13.5" cy="29" r="1.3"/><circle cx="23" cy="29" r="1.3"/></g></svg><div class="t" style="left:68px;top:99px;font-size:10.5px;color:#f0f0f0">right ear</div><div class="a" style="left:0;top:124px;width:268px;height:40px;background:#535353;border-bottom:1px solid #464646"></div><div class="a" style="left:29px;top:124px;width:1px;height:41px;background:#474747"></div><svg class="a" style="left:8px;top:141px" width="15" height="10"><path d="M0.5,5 Q7.5,-2.5 14.5,5 Q7.5,12.5 0.5,5Z" fill="#dcdcdc"/><circle cx="7.5" cy="5" r="3.3" fill="#4a4a4a"/><circle cx="8.5" cy="3.8" r="0.9" fill="#dcdcdc"/></svg><svg class="a" style="left:34px;top:128px" width="25" height="32"><defs><clipPath id="tc128"><rect x="1" y="1" width="23" height="30"/></clipPath></defs><rect x="0" y="0" width="25" height="32" fill="#2c2c2c"/><rect x="1" y="1" width="23" height="30" fill="#707070"/><g clip-path="url(#tc128)"><g fill="#959595"><rect x="1" y="1" width="4" height="4"/><rect x="9" y="1" width="4" height="4"/><rect x="17" y="1" width="4" height="4"/><rect x="5" y="5" width="4" height="4"/><rect x="13" y="5" width="4" height="4"/><rect x="21" y="5" width="4" height="4"/><rect x="1" y="9" width="4" height="4"/><rect x="9" y="9" width="4" height="4"/><rect x="17" y="9" width="4" height="4"/><rect x="5" y="13" width="4" height="4"/><rect x="13" y="13" width="4" height="4"/><rect x="21" y="13" width="4" height="4"/><rect x="1" y="17" width="4" height="4"/><rect x="9" y="17" width="4" height="4"/><rect x="17" y="17" width="4" height="4"/><rect x="5" y="21" width="4" height="4"/><rect x="13" y="21" width="4" height="4"/><rect x="21" y="21" width="4" height="4"/><rect x="1" y="25" width="4" height="4"/><rect x="9" y="25" width="4" height="4"/><rect x="17" y="25" width="4" height="4"/><rect x="5" y="29" width="4" height="4"/><rect x="13" y="29" width="4" height="4"/><rect x="21" y="29" width="4" height="4"/></g></g><rect x="10" y="17" width="15" height="15" fill="#2c2c2c"/><rect x="11" y="18" width="13" height="13" fill="#535353"/><rect x="13.5" y="21.5" width="9.5" height="7.5" fill="none" stroke="#e8e8e8" stroke-width="1.1"/><g fill="#535353" stroke="#e8e8e8" stroke-width="1"><circle cx="13.5" cy="21.5" r="1.3"/><circle cx="23" cy="21.5" r="1.3"/><circle cx="13.5" cy="29" r="1.3"/><circle cx="23" cy="29" r="1.3"/></g></svg><div class="t" style="left:68px;top:140px;font-size:10.5px;color:#f0f0f0">left ear</div><div class="a" style="left:0;top:165px;width:268px;height:40px;background:#535353;border-bottom:1px solid #464646"></div><div class="a" style="left:29px;top:165px;width:1px;height:41px;background:#474747"></div><svg class="a" style="left:8px;top:182px" width="15" height="10"><path d="M0.5,5 Q7.5,-2.5 14.5,5 Q7.5,12.5 0.5,5Z" fill="#dcdcdc"/><circle cx="7.5" cy="5" r="3.3" fill="#4a4a4a"/><circle cx="8.5" cy="3.8" r="0.9" fill="#dcdcdc"/></svg><svg class="a" style="left:34px;top:169px" width="25" height="32"><defs><clipPath id="tc169"><rect x="1" y="1" width="23" height="30"/></clipPath></defs><rect x="0" y="0" width="25" height="32" fill="#2c2c2c"/><rect x="1" y="1" width="23" height="30" fill="#707070"/><g clip-path="url(#tc169)"><g fill="#959595"><rect x="1" y="1" width="4" height="4"/><rect x="9" y="1" width="4" height="4"/><rect x="17" y="1" width="4" height="4"/><rect x="5" y="5" width="4" height="4"/><rect x="13" y="5" width="4" height="4"/><rect x="21" y="5" width="4" height="4"/><rect x="1" y="9" width="4" height="4"/><rect x="9" y="9" width="4" height="4"/><rect x="17" y="9" width="4" height="4"/><rect x="5" y="13" width="4" height="4"/><rect x="13" y="13" width="4" height="4"/><rect x="21" y="13" width="4" height="4"/><rect x="1" y="17" width="4" height="4"/><rect x="9" y="17" width="4" height="4"/><rect x="17" y="17" width="4" height="4"/><rect x="5" y="21" width="4" height="4"/><rect x="13" y="21" width="4" height="4"/><rect x="21" y="21" width="4" height="4"/><rect x="1" y="25" width="4" height="4"/><rect x="9" y="25" width="4" height="4"/><rect x="17" y="25" width="4" height="4"/><rect x="5" y="29" width="4" height="4"/><rect x="13" y="29" width="4" height="4"/><rect x="21" y="29" width="4" height="4"/></g></g><rect x="10" y="17" width="15" height="15" fill="#2c2c2c"/><rect x="11" y="18" width="13" height="13" fill="#535353"/><rect x="13.5" y="21.5" width="9.5" height="7.5" fill="none" stroke="#e8e8e8" stroke-width="1.1"/><g fill="#535353" stroke="#e8e8e8" stroke-width="1"><circle cx="13.5" cy="21.5" r="1.3"/><circle cx="23" cy="21.5" r="1.3"/><circle cx="13.5" cy="29" r="1.3"/><circle cx="23" cy="29" r="1.3"/></g></svg><div class="t" style="left:68px;top:181px;font-size:10.5px;color:#f0f0f0">eye</div><div class="a" style="left:0;top:206px;width:268px;height:40px;background:#535353;border-bottom:1px solid #464646"></div><div class="a" style="left:29px;top:206px;width:1px;height:41px;background:#474747"></div><svg class="a" style="left:8px;top:223px" width="15" height="10"><path d="M0.5,5 Q7.5,-2.5 14.5,5 Q7.5,12.5 0.5,5Z" fill="#dcdcdc"/><circle cx="7.5" cy="5" r="3.3" fill="#4a4a4a"/><circle cx="8.5" cy="3.8" r="0.9" fill="#dcdcdc"/></svg><svg class="a" style="left:34px;top:210px" width="25" height="32"><defs><clipPath id="tc210"><rect x="1" y="1" width="23" height="30"/></clipPath></defs><rect x="0" y="0" width="25" height="32" fill="#2c2c2c"/><rect x="1" y="1" width="23" height="30" fill="#707070"/><g clip-path="url(#tc210)"><g fill="#959595"><rect x="1" y="1" width="4" height="4"/><rect x="9" y="1" width="4" height="4"/><rect x="17" y="1" width="4" height="4"/><rect x="5" y="5" width="4" height="4"/><rect x="13" y="5" width="4" height="4"/><rect x="21" y="5" width="4" height="4"/><rect x="1" y="9" width="4" height="4"/><rect x="9" y="9" width="4" height="4"/><rect x="17" y="9" width="4" height="4"/><rect x="5" y="13" width="4" height="4"/><rect x="13" y="13" width="4" height="4"/><rect x="21" y="13" width="4" height="4"/><rect x="1" y="17" width="4" height="4"/><rect x="9" y="17" width="4" height="4"/><rect x="17" y="17" width="4" height="4"/><rect x="5" y="21" width="4" height="4"/><rect x="13" y="21" width="4" height="4"/><rect x="21" y="21" width="4" height="4"/><rect x="1" y="25" width="4" height="4"/><rect x="9" y="25" width="4" height="4"/><rect x="17" y="25" width="4" height="4"/><rect x="5" y="29" width="4" height="4"/><rect x="13" y="29" width="4" height="4"/><rect x="21" y="29" width="4" height="4"/></g></g><rect x="10" y="17" width="15" height="15" fill="#2c2c2c"/><rect x="11" y="18" width="13" height="13" fill="#535353"/><rect x="13.5" y="21.5" width="9.5" height="7.5" fill="none" stroke="#e8e8e8" stroke-width="1.1"/><g fill="#535353" stroke="#e8e8e8" stroke-width="1"><circle cx="13.5" cy="21.5" r="1.3"/><circle cx="23" cy="21.5" r="1.3"/><circle cx="13.5" cy="29" r="1.3"/><circle cx="23" cy="29" r="1.3"/></g></svg><div class="t" style="left:68px;top:222px;font-size:10.5px;color:#f0f0f0">head</div><div class="a" style="left:0;top:247px;width:268px;height:40px;background:#535353;border-bottom:1px solid #464646"></div><div class="a" style="left:29px;top:247px;width:1px;height:41px;background:#474747"></div><svg class="a" style="left:8px;top:264px" width="15" height="10"><path d="M0.5,5 Q7.5,-2.5 14.5,5 Q7.5,12.5 0.5,5Z" fill="#dcdcdc"/><circle cx="7.5" cy="5" r="3.3" fill="#4a4a4a"/><circle cx="8.5" cy="3.8" r="0.9" fill="#dcdcdc"/></svg><svg class="a" style="left:34px;top:251px" width="25" height="32"><defs><clipPath id="tc251"><rect x="1" y="1" width="23" height="30"/></clipPath></defs><rect x="0" y="0" width="25" height="32" fill="#2c2c2c"/><rect x="1" y="1" width="23" height="30" fill="#707070"/><g clip-path="url(#tc251)"><g fill="#959595"><rect x="1" y="1" width="4" height="4"/><rect x="9" y="1" width="4" height="4"/><rect x="17" y="1" width="4" height="4"/><rect x="5" y="5" width="4" height="4"/><rect x="13" y="5" width="4" height="4"/><rect x="21" y="5" width="4" height="4"/><rect x="1" y="9" width="4" height="4"/><rect x="9" y="9" width="4" height="4"/><rect x="17" y="9" width="4" height="4"/><rect x="5" y="13" width="4" height="4"/><rect x="13" y="13" width="4" height="4"/><rect x="21" y="13" width="4" height="4"/><rect x="1" y="17" width="4" height="4"/><rect x="9" y="17" width="4" height="4"/><rect x="17" y="17" width="4" height="4"/><rect x="5" y="21" width="4" height="4"/><rect x="13" y="21" width="4" height="4"/><rect x="21" y="21" width="4" height="4"/><rect x="1" y="25" width="4" height="4"/><rect x="9" y="25" width="4" height="4"/><rect x="17" y="25" width="4" height="4"/><rect x="5" y="29" width="4" height="4"/><rect x="13" y="29" width="4" height="4"/><rect x="21" y="29" width="4" height="4"/></g></g><rect x="10" y="17" width="15" height="15" fill="#2c2c2c"/><rect x="11" y="18" width="13" height="13" fill="#535353"/><rect x="13.5" y="21.5" width="9.5" height="7.5" fill="none" stroke="#e8e8e8" stroke-width="1.1"/><g fill="#535353" stroke="#e8e8e8" stroke-width="1"><circle cx="13.5" cy="21.5" r="1.3"/><circle cx="23" cy="21.5" r="1.3"/><circle cx="13.5" cy="29" r="1.3"/><circle cx="23" cy="29" r="1.3"/></g></svg><div class="t" style="left:68px;top:263px;font-size:10.5px;color:#f0f0f0">left foot</div><div class="a" style="left:0;top:288px;width:268px;height:40px;background:#535353;border-bottom:1px solid #464646"></div><div class="a" style="left:29px;top:288px;width:1px;height:41px;background:#474747"></div><svg class="a" style="left:8px;top:305px" width="15" height="10"><path d="M0.5,5 Q7.5,-2.5 14.5,5 Q7.5,12.5 0.5,5Z" fill="#dcdcdc"/><circle cx="7.5" cy="5" r="3.3" fill="#4a4a4a"/><circle cx="8.5" cy="3.8" r="0.9" fill="#dcdcdc"/></svg><svg class="a" style="left:34px;top:292px" width="25" height="32"><defs><clipPath id="tc292"><rect x="1" y="1" width="23" height="30"/></clipPath></defs><rect x="0" y="0" width="25" height="32" fill="#2c2c2c"/><rect x="1" y="1" width="23" height="30" fill="#707070"/><g clip-path="url(#tc292)"><g fill="#959595"><rect x="1" y="1" width="4" height="4"/><rect x="9" y="1" width="4" height="4"/><rect x="17" y="1" width="4" height="4"/><rect x="5" y="5" width="4" height="4"/><rect x="13" y="5" width="4" height="4"/><rect x="21" y="5" width="4" height="4"/><rect x="1" y="9" width="4" height="4"/><rect x="9" y="9" width="4" height="4"/><rect x="17" y="9" width="4" height="4"/><rect x="5" y="13" width="4" height="4"/><rect x="13" y="13" width="4" height="4"/><rect x="21" y="13" width="4" height="4"/><rect x="1" y="17" width="4" height="4"/><rect x="9" y="17" width="4" height="4"/><rect x="17" y="17" width="4" height="4"/><rect x="5" y="21" width="4" height="4"/><rect x="13" y="21" width="4" height="4"/><rect x="21" y="21" width="4" height="4"/><rect x="1" y="25" width="4" height="4"/><rect x="9" y="25" width="4" height="4"/><rect x="17" y="25" width="4" height="4"/><rect x="5" y="29" width="4" height="4"/><rect x="13" y="29" width="4" height="4"/><rect x="21" y="29" width="4" height="4"/></g></g><rect x="10" y="17" width="15" height="15" fill="#2c2c2c"/><rect x="11" y="18" width="13" height="13" fill="#535353"/><rect x="13.5" y="21.5" width="9.5" height="7.5" fill="none" stroke="#e8e8e8" stroke-width="1.1"/><g fill="#535353" stroke="#e8e8e8" stroke-width="1"><circle cx="13.5" cy="21.5" r="1.3"/><circle cx="23" cy="21.5" r="1.3"/><circle cx="13.5" cy="29" r="1.3"/><circle cx="23" cy="29" r="1.3"/></g></svg><div class="t" style="left:68px;top:304px;font-size:10.5px;color:#f0f0f0">left upper leg</div><div class="a" style="left:0;top:329px;width:268px;height:40px;background:#535353;border-bottom:1px solid #464646"></div><div class="a" style="left:29px;top:329px;width:1px;height:41px;background:#474747"></div><svg class="a" style="left:8px;top:346px" width="15" height="10"><path d="M0.5,5 Q7.5,-2.5 14.5,5 Q7.5,12.5 0.5,5Z" fill="#dcdcdc"/><circle cx="7.5" cy="5" r="3.3" fill="#4a4a4a"/><circle cx="8.5" cy="3.8" r="0.9" fill="#dcdcdc"/></svg><svg class="a" style="left:34px;top:333px" width="25" height="32"><defs><clipPath id="tc333"><rect x="1" y="1" width="23" height="30"/></clipPath></defs><rect x="0" y="0" width="25" height="32" fill="#2c2c2c"/><rect x="1" y="1" width="23" height="30" fill="#707070"/><g clip-path="url(#tc333)"><g fill="#959595"><rect x="1" y="1" width="4" height="4"/><rect x="9" y="1" width="4" height="4"/><rect x="17" y="1" width="4" height="4"/><rect x="5" y="5" width="4" height="4"/><rect x="13" y="5" width="4" height="4"/><rect x="21" y="5" width="4" height="4"/><rect x="1" y="9" width="4" height="4"/><rect x="9" y="9" width="4" height="4"/><rect x="17" y="9" width="4" height="4"/><rect x="5" y="13" width="4" height="4"/><rect x="13" y="13" width="4" height="4"/><rect x="21" y="13" width="4" height="4"/><rect x="1" y="17" width="4" height="4"/><rect x="9" y="17" width="4" height="4"/><rect x="17" y="17" width="4" height="4"/><rect x="5" y="21" width="4" height="4"/><rect x="13" y="21" width="4" height="4"/><rect x="21" y="21" width="4" height="4"/><rect x="1" y="25" width="4" height="4"/><rect x="9" y="25" width="4" height="4"/><rect x="17" y="25" width="4" height="4"/><rect x="5" y="29" width="4" height="4"/><rect x="13" y="29" width="4" height="4"/><rect x="21" y="29" width="4" height="4"/></g></g><rect x="10" y="17" width="15" height="15" fill="#2c2c2c"/><rect x="11" y="18" width="13" height="13" fill="#535353"/><rect x="13.5" y="21.5" width="9.5" height="7.5" fill="none" stroke="#e8e8e8" stroke-width="1.1"/><g fill="#535353" stroke="#e8e8e8" stroke-width="1"><circle cx="13.5" cy="21.5" r="1.3"/><circle cx="23" cy="21.5" r="1.3"/><circle cx="13.5" cy="29" r="1.3"/><circle cx="23" cy="29" r="1.3"/></g></svg><div class="t" style="left:68px;top:345px;font-size:10.5px;color:#f0f0f0">right leg</div><div class="a" style="left:0;top:370px;width:268px;height:40px;background:#535353;border-bottom:1px solid #464646"></div><div class="a" style="left:29px;top:370px;width:1px;height:41px;background:#474747"></div><svg class="a" style="left:8px;top:387px" width="15" height="10"><path d="M0.5,5 Q7.5,-2.5 14.5,5 Q7.5,12.5 0.5,5Z" fill="#dcdcdc"/><circle cx="7.5" cy="5" r="3.3" fill="#4a4a4a"/><circle cx="8.5" cy="3.8" r="0.9" fill="#dcdcdc"/></svg><svg class="a" style="left:34px;top:374px" width="25" height="32"><defs><clipPath id="tc374"><rect x="1" y="1" width="23" height="30"/></clipPath></defs><rect x="0" y="0" width="25" height="32" fill="#2c2c2c"/><rect x="1" y="1" width="23" height="30" fill="#707070"/><g clip-path="url(#tc374)"><g fill="#959595"><rect x="1" y="1" width="4" height="4"/><rect x="9" y="1" width="4" height="4"/><rect x="17" y="1" width="4" height="4"/><rect x="5" y="5" width="4" height="4"/><rect x="13" y="5" width="4" height="4"/><rect x="21" y="5" width="4" height="4"/><rect x="1" y="9" width="4" height="4"/><rect x="9" y="9" width="4" height="4"/><rect x="17" y="9" width="4" height="4"/><rect x="5" y="13" width="4" height="4"/><rect x="13" y="13" width="4" height="4"/><rect x="21" y="13" width="4" height="4"/><rect x="1" y="17" width="4" height="4"/><rect x="9" y="17" width="4" height="4"/><rect x="17" y="17" width="4" height="4"/><rect x="5" y="21" width="4" height="4"/><rect x="13" y="21" width="4" height="4"/><rect x="21" y="21" width="4" height="4"/><rect x="1" y="25" width="4" height="4"/><rect x="9" y="25" width="4" height="4"/><rect x="17" y="25" width="4" height="4"/><rect x="5" y="29" width="4" height="4"/><rect x="13" y="29" width="4" height="4"/><rect x="21" y="29" width="4" height="4"/></g></g><rect x="10" y="17" width="15" height="15" fill="#2c2c2c"/><rect x="11" y="18" width="13" height="13" fill="#535353"/><rect x="13.5" y="21.5" width="9.5" height="7.5" fill="none" stroke="#e8e8e8" stroke-width="1.1"/><g fill="#535353" stroke="#e8e8e8" stroke-width="1"><circle cx="13.5" cy="21.5" r="1.3"/><circle cx="23" cy="21.5" r="1.3"/><circle cx="13.5" cy="29" r="1.3"/><circle cx="23" cy="29" r="1.3"/></g></svg><div class="t" style="left:68px;top:386px;font-size:10.5px;color:#f0f0f0">torso + hips</div><div class="a" style="left:0;top:411px;width:268px;height:40px;background:#535353;border-bottom:1px solid #464646"></div><div class="a" style="left:29px;top:411px;width:1px;height:41px;background:#474747"></div><svg class="a" style="left:8px;top:428px" width="15" height="10"><path d="M0.5,5 Q7.5,-2.5 14.5,5 Q7.5,12.5 0.5,5Z" fill="#dcdcdc"/><circle cx="7.5" cy="5" r="3.3" fill="#4a4a4a"/><circle cx="8.5" cy="3.8" r="0.9" fill="#dcdcdc"/></svg><svg class="a" style="left:34px;top:415px" width="25" height="32"><defs><clipPath id="tc415"><rect x="1" y="1" width="23" height="30"/></clipPath></defs><rect x="0" y="0" width="25" height="32" fill="#2c2c2c"/><rect x="1" y="1" width="23" height="30" fill="#707070"/><g clip-path="url(#tc415)"><g fill="#959595"><rect x="1" y="1" width="4" height="4"/><rect x="9" y="1" width="4" height="4"/><rect x="17" y="1" width="4" height="4"/><rect x="5" y="5" width="4" height="4"/><rect x="13" y="5" width="4" height="4"/><rect x="21" y="5" width="4" height="4"/><rect x="1" y="9" width="4" height="4"/><rect x="9" y="9" width="4" height="4"/><rect x="17" y="9" width="4" height="4"/><rect x="5" y="13" width="4" height="4"/><rect x="13" y="13" width="4" height="4"/><rect x="21" y="13" width="4" height="4"/><rect x="1" y="17" width="4" height="4"/><rect x="9" y="17" width="4" height="4"/><rect x="17" y="17" width="4" height="4"/><rect x="5" y="21" width="4" height="4"/><rect x="13" y="21" width="4" height="4"/><rect x="21" y="21" width="4" height="4"/><rect x="1" y="25" width="4" height="4"/><rect x="9" y="25" width="4" height="4"/><rect x="17" y="25" width="4" height="4"/><rect x="5" y="29" width="4" height="4"/><rect x="13" y="29" width="4" height="4"/><rect x="21" y="29" width="4" height="4"/></g></g><rect x="10" y="17" width="15" height="15" fill="#2c2c2c"/><rect x="11" y="18" width="13" height="13" fill="#535353"/><rect x="13.5" y="21.5" width="9.5" height="7.5" fill="none" stroke="#e8e8e8" stroke-width="1.1"/><g fill="#535353" stroke="#e8e8e8" stroke-width="1"><circle cx="13.5" cy="21.5" r="1.3"/><circle cx="23" cy="21.5" r="1.3"/><circle cx="13.5" cy="29" r="1.3"/><circle cx="23" cy="29" r="1.3"/></g></svg><div class="t" style="left:68px;top:427px;font-size:10.5px;color:#f0f0f0">right arm + neck</div><div class="a" style="left:0;top:452px;width:268px;height:40px;background:#535353;border-bottom:1px solid #464646"></div><div class="a" style="left:29px;top:452px;width:1px;height:41px;background:#474747"></div><svg class="a" style="left:8px;top:469px" width="15" height="10"><path d="M0.5,5 Q7.5,-2.5 14.5,5 Q7.5,12.5 0.5,5Z" fill="#dcdcdc"/><circle cx="7.5" cy="5" r="3.3" fill="#4a4a4a"/><circle cx="8.5" cy="3.8" r="0.9" fill="#dcdcdc"/></svg><svg class="a" style="left:34px;top:456px" width="25" height="32"><defs><clipPath id="tc456"><rect x="1" y="1" width="23" height="30"/></clipPath></defs><rect x="0" y="0" width="25" height="32" fill="#2c2c2c"/><rect x="1" y="1" width="23" height="30" fill="#707070"/><g clip-path="url(#tc456)"><g fill="#959595"><rect x="1" y="1" width="4" height="4"/><rect x="9" y="1" width="4" height="4"/><rect x="17" y="1" width="4" height="4"/><rect x="5" y="5" width="4" height="4"/><rect x="13" y="5" width="4" height="4"/><rect x="21" y="5" width="4" height="4"/><rect x="1" y="9" width="4" height="4"/><rect x="9" y="9" width="4" height="4"/><rect x="17" y="9" width="4" height="4"/><rect x="5" y="13" width="4" height="4"/><rect x="13" y="13" width="4" height="4"/><rect x="21" y="13" width="4" height="4"/><rect x="1" y="17" width="4" height="4"/><rect x="9" y="17" width="4" height="4"/><rect x="17" y="17" width="4" height="4"/><rect x="5" y="21" width="4" height="4"/><rect x="13" y="21" width="4" height="4"/><rect x="21" y="21" width="4" height="4"/><rect x="1" y="25" width="4" height="4"/><rect x="9" y="25" width="4" height="4"/><rect x="17" y="25" width="4" height="4"/><rect x="5" y="29" width="4" height="4"/><rect x="13" y="29" width="4" height="4"/><rect x="21" y="29" width="4" height="4"/></g></g><rect x="10" y="17" width="15" height="15" fill="#2c2c2c"/><rect x="11" y="18" width="13" height="13" fill="#535353"/><rect x="13.5" y="21.5" width="9.5" height="7.5" fill="none" stroke="#e8e8e8" stroke-width="1.1"/><g fill="#535353" stroke="#e8e8e8" stroke-width="1"><circle cx="13.5" cy="21.5" r="1.3"/><circle cx="23" cy="21.5" r="1.3"/><circle cx="13.5" cy="29" r="1.3"/><circle cx="23" cy="29" r="1.3"/></g></svg><div class="t" style="left:68px;top:468px;font-size:10.5px;color:#f0f0f0">left arm</div><div class="a" style="left:0;top:493px;width:268px;height:40px;background:#535353;border-bottom:1px solid #464646"></div><div class="a" style="left:29px;top:493px;width:1px;height:41px;background:#474747"></div><svg class="a" style="left:8px;top:510px" width="15" height="10"><path d="M0.5,5 Q7.5,-2.5 14.5,5 Q7.5,12.5 0.5,5Z" fill="#dcdcdc"/><circle cx="7.5" cy="5" r="3.3" fill="#4a4a4a"/><circle cx="8.5" cy="3.8" r="0.9" fill="#dcdcdc"/></svg><svg class="a" style="left:34px;top:497px" width="25" height="32"><defs><clipPath id="tc497"><rect x="1" y="1" width="23" height="30"/></clipPath></defs><rect x="0" y="0" width="25" height="32" fill="#2c2c2c"/><rect x="1" y="1" width="23" height="30" fill="#707070"/><g clip-path="url(#tc497)"><g fill="#959595"><rect x="1" y="1" width="4" height="4"/><rect x="9" y="1" width="4" height="4"/><rect x="17" y="1" width="4" height="4"/><rect x="5" y="5" width="4" height="4"/><rect x="13" y="5" width="4" height="4"/><rect x="21" y="5" width="4" height="4"/><rect x="1" y="9" width="4" height="4"/><rect x="9" y="9" width="4" height="4"/><rect x="17" y="9" width="4" height="4"/><rect x="5" y="13" width="4" height="4"/><rect x="13" y="13" width="4" height="4"/><rect x="21" y="13" width="4" height="4"/><rect x="1" y="17" width="4" height="4"/><rect x="9" y="17" width="4" height="4"/><rect x="17" y="17" width="4" height="4"/><rect x="5" y="21" width="4" height="4"/><rect x="13" y="21" width="4" height="4"/><rect x="21" y="21" width="4" height="4"/><rect x="1" y="25" width="4" height="4"/><rect x="9" y="25" width="4" height="4"/><rect x="17" y="25" width="4" height="4"/><rect x="5" y="29" width="4" height="4"/><rect x="13" y="29" width="4" height="4"/><rect x="21" y="29" width="4" height="4"/></g></g><rect x="10" y="17" width="15" height="15" fill="#2c2c2c"/><rect x="11" y="18" width="13" height="13" fill="#535353"/><rect x="13.5" y="21.5" width="9.5" height="7.5" fill="none" stroke="#e8e8e8" stroke-width="1.1"/><g fill="#535353" stroke="#e8e8e8" stroke-width="1"><circle cx="13.5" cy="21.5" r="1.3"/><circle cx="23" cy="21.5" r="1.3"/><circle cx="13.5" cy="29" r="1.3"/><circle cx="23" cy="29" r="1.3"/></g></svg><div class="t" style="left:68px;top:509px;font-size:10.5px;color:#f0f0f0">left nipple</div><div class="a" style="left:0;top:534px;width:268px;height:40px;background:#535353;border-bottom:1px solid #464646"></div><div class="a" style="left:29px;top:534px;width:1px;height:41px;background:#474747"></div><svg class="a" style="left:8px;top:551px" width="15" height="10"><path d="M0.5,5 Q7.5,-2.5 14.5,5 Q7.5,12.5 0.5,5Z" fill="#dcdcdc"/><circle cx="7.5" cy="5" r="3.3" fill="#4a4a4a"/><circle cx="8.5" cy="3.8" r="0.9" fill="#dcdcdc"/></svg><svg class="a" style="left:34px;top:538px" width="25" height="32"><defs><clipPath id="tc538"><rect x="1" y="1" width="23" height="30"/></clipPath></defs><rect x="0" y="0" width="25" height="32" fill="#2c2c2c"/><rect x="1" y="1" width="23" height="30" fill="#707070"/><g clip-path="url(#tc538)"><g fill="#959595"><rect x="1" y="1" width="4" height="4"/><rect x="9" y="1" width="4" height="4"/><rect x="17" y="1" width="4" height="4"/><rect x="5" y="5" width="4" height="4"/><rect x="13" y="5" width="4" height="4"/><rect x="21" y="5" width="4" height="4"/><rect x="1" y="9" width="4" height="4"/><rect x="9" y="9" width="4" height="4"/><rect x="17" y="9" width="4" height="4"/><rect x="5" y="13" width="4" height="4"/><rect x="13" y="13" width="4" height="4"/><rect x="21" y="13" width="4" height="4"/><rect x="1" y="17" width="4" height="4"/><rect x="9" y="17" width="4" height="4"/><rect x="17" y="17" width="4" height="4"/><rect x="5" y="21" width="4" height="4"/><rect x="13" y="21" width="4" height="4"/><rect x="21" y="21" width="4" height="4"/><rect x="1" y="25" width="4" height="4"/><rect x="9" y="25" width="4" height="4"/><rect x="17" y="25" width="4" height="4"/><rect x="5" y="29" width="4" height="4"/><rect x="13" y="29" width="4" height="4"/><rect x="21" y="29" width="4" height="4"/></g></g><rect x="10" y="17" width="15" height="15" fill="#2c2c2c"/><rect x="11" y="18" width="13" height="13" fill="#535353"/><rect x="13.5" y="21.5" width="9.5" height="7.5" fill="none" stroke="#e8e8e8" stroke-width="1.1"/><g fill="#535353" stroke="#e8e8e8" stroke-width="1"><circle cx="13.5" cy="21.5" r="1.3"/><circle cx="23" cy="21.5" r="1.3"/><circle cx="13.5" cy="29" r="1.3"/><circle cx="23" cy="29" r="1.3"/></g></svg><div class="t" style="left:68px;top:550px;font-size:10.5px;color:#f0f0f0">right boob</div><div class="a" style="left:0;top:575px;width:268px;height:40px;background:#535353;border-bottom:1px solid #464646"></div><div class="a" style="left:29px;top:575px;width:1px;height:41px;background:#474747"></div><svg class="a" style="left:8px;top:592px" width="15" height="10"><path d="M0.5,5 Q7.5,-2.5 14.5,5 Q7.5,12.5 0.5,5Z" fill="#dcdcdc"/><circle cx="7.5" cy="5" r="3.3" fill="#4a4a4a"/><circle cx="8.5" cy="3.8" r="0.9" fill="#dcdcdc"/></svg><svg class="a" style="left:34px;top:579px" width="25" height="32"><defs><clipPath id="tc579"><rect x="1" y="1" width="23" height="30"/></clipPath></defs><rect x="0" y="0" width="25" height="32" fill="#2c2c2c"/><rect x="1" y="1" width="23" height="30" fill="#707070"/><g clip-path="url(#tc579)"><g fill="#959595"><rect x="1" y="1" width="4" height="4"/><rect x="9" y="1" width="4" height="4"/><rect x="17" y="1" width="4" height="4"/><rect x="5" y="5" width="4" height="4"/><rect x="13" y="5" width="4" height="4"/><rect x="21" y="5" width="4" height="4"/><rect x="1" y="9" width="4" height="4"/><rect x="9" y="9" width="4" height="4"/><rect x="17" y="9" width="4" height="4"/><rect x="5" y="13" width="4" height="4"/><rect x="13" y="13" width="4" height="4"/><rect x="21" y="13" width="4" height="4"/><rect x="1" y="17" width="4" height="4"/><rect x="9" y="17" width="4" height="4"/><rect x="17" y="17" width="4" height="4"/><rect x="5" y="21" width="4" height="4"/><rect x="13" y="21" width="4" height="4"/><rect x="21" y="21" width="4" height="4"/><rect x="1" y="25" width="4" height="4"/><rect x="9" y="25" width="4" height="4"/><rect x="17" y="25" width="4" height="4"/><rect x="5" y="29" width="4" height="4"/><rect x="13" y="29" width="4" height="4"/><rect x="21" y="29" width="4" height="4"/></g></g><rect x="10" y="17" width="15" height="15" fill="#2c2c2c"/><rect x="11" y="18" width="13" height="13" fill="#535353"/><rect x="13.5" y="21.5" width="9.5" height="7.5" fill="none" stroke="#e8e8e8" stroke-width="1.1"/><g fill="#535353" stroke="#e8e8e8" stroke-width="1"><circle cx="13.5" cy="21.5" r="1.3"/><circle cx="23" cy="21.5" r="1.3"/><circle cx="13.5" cy="29" r="1.3"/><circle cx="23" cy="29" r="1.3"/></g></svg><div class="t" style="left:68px;top:591px;font-size:10.5px;color:#f0f0f0">left boob</div></div><div class="a" style="left:1903px;top:444px;width:16px;height:602px;background:#4a4a4a"></div><div class="a" style="left:1905px;top:462px;width:12px;height:501px;background:#6a6a6a"></div><svg class="a" style="left:1907px;top:452px" width="9" height="6"><path d="M0.5,5 L4.5,1 L8.5,5" fill="none" stroke="#8a8a8a" stroke-width="1.1"/></svg><svg class="a" style="left:1907px;top:1034px" width="9" height="6"><path d="M0.5,1 L4.5,5 L8.5,1" fill="none" stroke="#8a8a8a" stroke-width="1.1"/></svg>
<div class="a" style="left:1634px;top:1046px;width:285px;height:1px;background:#3a3a3a"></div><div class="a" style="left:1634px;top:1047px;width:285px;height:24px;background:#535353"></div><div class="a" style="left:1634px;top:1071px;width:285px;height:2px;background:#3a3a3a"></div><div class="a" style="left:1634px;top:1073px;width:285px;height:7px;background:#535353"></div><svg class="a" style="left:1767px;top:1073px" width="20" height="4"><g fill="#3c3c3c"><rect x="0" y="0" width="1" height="4"/><rect x="2" y="0" width="1" height="4"/><rect x="4" y="0" width="1" height="4"/><rect x="6" y="0" width="1" height="4"/><rect x="8" y="0" width="1" height="4"/><rect x="10" y="0" width="1" height="4"/><rect x="12" y="0" width="1" height="4"/><rect x="14" y="0" width="1" height="4"/><rect x="16" y="0" width="1" height="4"/><rect x="18" y="0" width="1" height="4"/></g></svg><svg class="a" style="left:1716px;top:1053px" width="16" height="10"><g fill="none" stroke="#8a8a8a" stroke-width="1.3"><rect x="1" y="1.5" width="7" height="6" rx="3"/><rect x="7" y="1.5" width="7" height="6" rx="3"/></g><line x1="4" y1="4.5" x2="11" y2="4.5" stroke="#8a8a8a" stroke-width="1.3"/></svg>
<div class="t" style="left:1745px;top:1053px;font-size:14px;font-style:italic;color:#dcdcdc;letter-spacing:-0.5px">fx</div>
<svg class="a" style="left:1756px;top:1065px" width="4" height="3"><path d="M0,0 H4 L2,2.5Z" fill="#e0e0e0"/></svg>
<svg class="a" style="left:1771px;top:1053px" width="14" height="11"><rect x="0" y="0" width="14" height="11" fill="#dcdcdc"/><circle cx="7" cy="5.5" r="3" fill="#535353"/></svg>
<svg class="a" style="left:1799px;top:1053px" width="13" height="13"><circle cx="6" cy="6" r="5.5" fill="none" stroke="#dcdcdc" stroke-width="1.2"/><path d="M9.9,2.1 A5.5,5.5 0 0 1 2.1,9.9Z" fill="#dcdcdc"/></svg>
<svg class="a" style="left:1810px;top:1065px" width="4" height="3"><path d="M0,0 H4 L2,2.5Z" fill="#e0e0e0"/></svg>
<svg class="a" style="left:1826px;top:1053px" width="13" height="11"><path d="M0,1 H5 L6,2 H13.5 V10.5 H0Z" fill="#dcdcdc"/></svg>
<svg class="a" style="left:1853px;top:1053px" width="12" height="12"><path d="M0.6,0.6 H10.8 V11 H4 L0.6,7.6Z" fill="none" stroke="#dcdcdc" stroke-width="1.2"/><path d="M0.6,7.6 H4 V11Z" fill="#dcdcdc"/><path d="M5,4 H10 V10.4 H5Z" fill="#3a3a3a"/></svg>
<svg class="a" style="left:1880px;top:1052px" width="12" height="14"><path d="M0.5,3 H11.5 M4,3 V1.5 H8 V3" fill="none" stroke="#dcdcdc" stroke-width="1.1"/><path d="M1.8,4 H10.2 L9.8,13.2 H2.2Z" fill="none" stroke="#dcdcdc" stroke-width="1.2"/><path d="M4.3,5.5 V11.5 M6,5.5 V11.5 M7.7,5.5 V11.5" stroke="#dcdcdc" stroke-width="0.9"/></svg>

<div class="a" style="left:1919px;top:26px;width:1px;height:1054px;background:#3c3c3c"></div>
<!-- TIMELINE -->
<div class="a" style="left:38px;top:1060px;width:1556px;height:20px;background:#424242;border:1px solid #3a3a3a;border-bottom:2px solid #2e2e2e"></div>
<div class="a" style="left:40px;top:1062px;width:55px;height:16px;background:#535353"></div>
<div class="ptab" style="left:46px;top:1066px;color:#f2f2f2;font-size:10px">Timeline</div><svg class="a" style="left:1578px;top:1066px" width="10" height="8"><g fill="#d8d8d8"><rect y="0" width="10" height="1.1"/><rect y="2" width="10" height="1.1"/><rect y="4" width="10" height="1.1"/><rect y="6" width="10" height="1.1"/></g></svg>

<svg class="a" style="left:1659px;top:531px" width="18" height="19"><path d="M6,3 Q6,1.2 7.8,1.2 Q9.6,1.2 9.6,3 L9.6,7.2 Q11,6.3 12.2,7 Q13.6,6.8 14.2,8 Q15.8,8.2 16.2,9.8 L15.8,13 Q15.2,16 13.6,17.6 L6.6,17.6 Q4.8,15 2,11.5 Q1,10 2.4,9.3 Q3.8,8.8 6,10.8 Z" fill="#fff" stroke="#000" stroke-width="1.3" stroke-linejoin="round"/><path d="M9.6,7.2 V10.5 M12.2,7 V10.5 M14.2,8 V10.8" stroke="#000" stroke-width="0.9"/></svg>
</body></html>
